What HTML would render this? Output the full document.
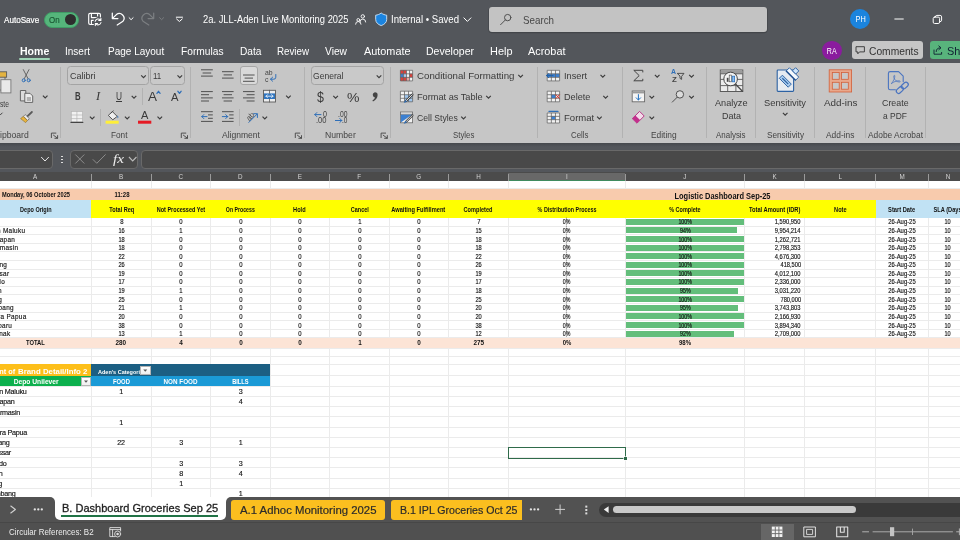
<!DOCTYPE html>
<html><head><meta charset="utf-8"><title>Excel</title>
<style>
html,body{margin:0;padding:0;}
body{width:960px;height:540px;overflow:hidden;position:relative;background:#53565b;font-family:'Liberation Sans', sans-serif;}
.t{position:absolute;white-space:pre;display:block;}
.c{-webkit-text-stroke:0.14px #111;}
svg{position:absolute;overflow:visible;}
#w{position:absolute;left:0;top:0;width:960px;height:540px;overflow:hidden;will-change:transform;}
</style></head><body><div id="w">
<div style="position:absolute;left:0px;top:0px;width:960px;height:62.5px;background:#53565b;"></div>
<div style="position:absolute;left:0px;top:62.5px;width:960px;height:80px;background:#c6c6c6;"></div>
<div style="position:absolute;left:0px;top:142.5px;width:960px;height:4px;background:linear-gradient(#46494d,#53565b);"></div>
<div style="position:absolute;left:43.6px;top:11.5px;width:35.4px;height:16px;background:#55b57b;border-radius:8px;border:1px solid #409c66;box-sizing:border-box;"></div>
<div style="position:absolute;left:64.9px;top:14px;width:11px;height:11px;background:#2e2e2e;border-radius:50%;"></div>
<div style="position:absolute;left:489px;top:6.9px;width:277.5px;height:25px;background:#c3c3c3;border-radius:3px;box-shadow:0 0.6px 0 0.7px #43464a;"></div>
<div style="position:absolute;left:850.4px;top:9.4px;width:20px;height:20px;background:#1b84de;border-radius:50%;"></div>
<div style="position:absolute;left:19.2px;top:58.2px;width:30.6px;height:1.8px;background:#9fd4b6;border-radius:1px;"></div>
<div style="position:absolute;left:822.2px;top:40.9px;width:19.4px;height:19.4px;background:#8a1c9e;border-radius:50%;"></div>
<div style="position:absolute;left:852.2px;top:41px;width:70.8px;height:18.4px;background:#c6c6c6;border-radius:3px;"></div>
<div style="position:absolute;left:930px;top:41px;width:40px;height:18.4px;background:#58b47c;border-radius:3px;"></div>
<div style="position:absolute;left:60.25px;top:67px;width:1px;height:71px;background:#b2b2b2;"></div>
<div style="position:absolute;left:190.1px;top:67px;width:1px;height:71px;background:#b2b2b2;"></div>
<div style="position:absolute;left:303.8px;top:67px;width:1px;height:71px;background:#b2b2b2;"></div>
<div style="position:absolute;left:389.8px;top:67px;width:1px;height:71px;background:#b2b2b2;"></div>
<div style="position:absolute;left:537.0px;top:67px;width:1px;height:71px;background:#b2b2b2;"></div>
<div style="position:absolute;left:621.5px;top:67px;width:1px;height:71px;background:#b2b2b2;"></div>
<div style="position:absolute;left:705.7px;top:67px;width:1px;height:71px;background:#b2b2b2;"></div>
<div style="position:absolute;left:755.0px;top:67px;width:1px;height:71px;background:#b2b2b2;"></div>
<div style="position:absolute;left:814.0px;top:67px;width:1px;height:71px;background:#b2b2b2;"></div>
<div style="position:absolute;left:864.8px;top:67px;width:1px;height:71px;background:#b2b2b2;"></div>
<div style="position:absolute;left:924.5px;top:67px;width:1px;height:71px;background:#b2b2b2;"></div>
<div style="position:absolute;left:142.0px;top:87.5px;width:1px;height:17.5px;background:#b2b2b2;"></div>
<div style="position:absolute;left:100.25px;top:109px;width:1px;height:17px;background:#b2b2b2;"></div>
<div style="position:absolute;left:239.0px;top:108.8px;width:1px;height:17.200000000000003px;background:#b2b2b2;"></div>
<div style="position:absolute;left:67.1px;top:66.2px;width:81.6px;height:19.099999999999994px;background:#c9c9c9;border:0.8px solid #a4a4a4;border-radius:3.5px;box-sizing:border-box;"></div>
<div style="position:absolute;left:150.1px;top:66.2px;width:34.9px;height:19.099999999999994px;background:#c9c9c9;border:0.8px solid #a4a4a4;border-radius:3.5px;box-sizing:border-box;"></div>
<div style="position:absolute;left:310.8px;top:66.2px;width:72.9px;height:19.099999999999994px;background:#c9c9c9;border:0.8px solid #a4a4a4;border-radius:3.5px;box-sizing:border-box;"></div>
<div style="position:absolute;left:115.5px;top:101px;width:6.5px;height:0.8px;background:#3a3a3a;"></div>
<div style="position:absolute;left:0px;top:146.5px;width:960px;height:25.5px;background:#53565b;"></div>
<div style="position:absolute;left:-5px;top:149.5px;width:58.4px;height:19.3px;background:#494949;border:0.9px solid #696969;border-radius:4px;box-sizing:border-box;"></div>
<div style="position:absolute;left:69.7px;top:149.5px;width:68.6px;height:19.3px;background:#494949;border:0.9px solid #696969;border-radius:4px;box-sizing:border-box;"></div>
<div style="position:absolute;left:141.3px;top:149.5px;width:830px;height:19.3px;background:#494949;border:0.9px solid #696969;border-radius:4px;box-sizing:border-box;"></div>
<div style="position:absolute;left:61px;top:155.60000000000002px;width:1.5px;height:1.5px;background:#ddd;"></div>
<div style="position:absolute;left:61px;top:158.60000000000002px;width:1.5px;height:1.5px;background:#ddd;"></div>
<div style="position:absolute;left:61px;top:161.60000000000002px;width:1.5px;height:1.5px;background:#ddd;"></div>
<div style="position:absolute;left:0px;top:172px;width:960px;height:9px;background:#4b4b4b;"></div>
<div style="position:absolute;left:508.3px;top:172.8px;width:117px;height:8.2px;background:#686868;"></div>
<div style="position:absolute;left:508.3px;top:180.3px;width:117px;height:0.8px;background:#3f8a5e;"></div>
<div style="position:absolute;left:90.5px;top:173.8px;width:1px;height:7.2px;background:#9a9a9a;"></div>
<div style="position:absolute;left:150.5px;top:173.8px;width:1px;height:7.2px;background:#9a9a9a;"></div>
<div style="position:absolute;left:210.2px;top:173.8px;width:1px;height:7.2px;background:#9a9a9a;"></div>
<div style="position:absolute;left:269.5px;top:173.8px;width:1px;height:7.2px;background:#9a9a9a;"></div>
<div style="position:absolute;left:329.1px;top:173.8px;width:1px;height:7.2px;background:#9a9a9a;"></div>
<div style="position:absolute;left:388.5px;top:173.8px;width:1px;height:7.2px;background:#9a9a9a;"></div>
<div style="position:absolute;left:448.1px;top:173.8px;width:1px;height:7.2px;background:#9a9a9a;"></div>
<div style="position:absolute;left:507.8px;top:173.8px;width:1px;height:7.2px;background:#9a9a9a;"></div>
<div style="position:absolute;left:624.9px;top:173.8px;width:1px;height:7.2px;background:#9a9a9a;"></div>
<div style="position:absolute;left:744.0px;top:173.8px;width:1px;height:7.2px;background:#9a9a9a;"></div>
<div style="position:absolute;left:804.0px;top:173.8px;width:1px;height:7.2px;background:#9a9a9a;"></div>
<div style="position:absolute;left:875.3px;top:173.8px;width:1px;height:7.2px;background:#9a9a9a;"></div>
<div style="position:absolute;left:928.1px;top:173.8px;width:1px;height:7.2px;background:#9a9a9a;"></div>
<div style="position:absolute;left:967.0px;top:173.8px;width:1px;height:7.2px;background:#9a9a9a;"></div>
<div style="position:absolute;left:0px;top:181px;width:960px;height:316px;background:#fff;"></div>
<div style="position:absolute;left:0px;top:187.8px;width:960px;height:1px;background:#ebebeb;"></div>
<div style="position:absolute;left:0px;top:199.5px;width:960px;height:1px;background:#ebebeb;"></div>
<div style="position:absolute;left:0px;top:216.9px;width:960px;height:1px;background:#ebebeb;"></div>
<div style="position:absolute;left:0px;top:225.5px;width:960px;height:1px;background:#ebebeb;"></div>
<div style="position:absolute;left:0px;top:234.1px;width:960px;height:1px;background:#ebebeb;"></div>
<div style="position:absolute;left:0px;top:242.7px;width:960px;height:1px;background:#ebebeb;"></div>
<div style="position:absolute;left:0px;top:251.3px;width:960px;height:1px;background:#ebebeb;"></div>
<div style="position:absolute;left:0px;top:259.9px;width:960px;height:1px;background:#ebebeb;"></div>
<div style="position:absolute;left:0px;top:268.5px;width:960px;height:1px;background:#ebebeb;"></div>
<div style="position:absolute;left:0px;top:277.1px;width:960px;height:1px;background:#ebebeb;"></div>
<div style="position:absolute;left:0px;top:285.7px;width:960px;height:1px;background:#ebebeb;"></div>
<div style="position:absolute;left:0px;top:294.3px;width:960px;height:1px;background:#ebebeb;"></div>
<div style="position:absolute;left:0px;top:302.9px;width:960px;height:1px;background:#ebebeb;"></div>
<div style="position:absolute;left:0px;top:311.5px;width:960px;height:1px;background:#ebebeb;"></div>
<div style="position:absolute;left:0px;top:320.1px;width:960px;height:1px;background:#ebebeb;"></div>
<div style="position:absolute;left:0px;top:328.7px;width:960px;height:1px;background:#ebebeb;"></div>
<div style="position:absolute;left:0px;top:337.3px;width:960px;height:1px;background:#ebebeb;"></div>
<div style="position:absolute;left:0px;top:347.5px;width:960px;height:1px;background:#ebebeb;"></div>
<div style="position:absolute;left:0px;top:356.1px;width:960px;height:1px;background:#ebebeb;"></div>
<div style="position:absolute;left:0px;top:364.0px;width:960px;height:1px;background:#ebebeb;"></div>
<div style="position:absolute;left:0px;top:375.3px;width:960px;height:1px;background:#ebebeb;"></div>
<div style="position:absolute;left:0px;top:385.8px;width:960px;height:1px;background:#ebebeb;"></div>
<div style="position:absolute;left:0px;top:396.0px;width:960px;height:1px;background:#ebebeb;"></div>
<div style="position:absolute;left:0px;top:406.2px;width:960px;height:1px;background:#ebebeb;"></div>
<div style="position:absolute;left:0px;top:416.40000000000003px;width:960px;height:1px;background:#ebebeb;"></div>
<div style="position:absolute;left:0px;top:426.6px;width:960px;height:1px;background:#ebebeb;"></div>
<div style="position:absolute;left:0px;top:436.8px;width:960px;height:1px;background:#ebebeb;"></div>
<div style="position:absolute;left:0px;top:447.0px;width:960px;height:1px;background:#ebebeb;"></div>
<div style="position:absolute;left:0px;top:457.2px;width:960px;height:1px;background:#ebebeb;"></div>
<div style="position:absolute;left:0px;top:467.4px;width:960px;height:1px;background:#ebebeb;"></div>
<div style="position:absolute;left:0px;top:477.6px;width:960px;height:1px;background:#ebebeb;"></div>
<div style="position:absolute;left:0px;top:487.8px;width:960px;height:1px;background:#ebebeb;"></div>
<div style="position:absolute;left:0px;top:498.0px;width:960px;height:1px;background:#ebebeb;"></div>
<div style="position:absolute;left:90.5px;top:181px;width:1px;height:316px;background:#ebebeb;"></div>
<div style="position:absolute;left:150.5px;top:181px;width:1px;height:316px;background:#ebebeb;"></div>
<div style="position:absolute;left:210.2px;top:181px;width:1px;height:316px;background:#ebebeb;"></div>
<div style="position:absolute;left:269.5px;top:181px;width:1px;height:316px;background:#ebebeb;"></div>
<div style="position:absolute;left:329.1px;top:181px;width:1px;height:316px;background:#ebebeb;"></div>
<div style="position:absolute;left:388.5px;top:181px;width:1px;height:316px;background:#ebebeb;"></div>
<div style="position:absolute;left:448.1px;top:181px;width:1px;height:316px;background:#ebebeb;"></div>
<div style="position:absolute;left:507.8px;top:181px;width:1px;height:316px;background:#ebebeb;"></div>
<div style="position:absolute;left:624.9px;top:181px;width:1px;height:316px;background:#ebebeb;"></div>
<div style="position:absolute;left:744.0px;top:181px;width:1px;height:316px;background:#ebebeb;"></div>
<div style="position:absolute;left:804.0px;top:181px;width:1px;height:316px;background:#ebebeb;"></div>
<div style="position:absolute;left:875.3px;top:181px;width:1px;height:316px;background:#ebebeb;"></div>
<div style="position:absolute;left:928.1px;top:181px;width:1px;height:316px;background:#ebebeb;"></div>
<div style="position:absolute;left:967.0px;top:181px;width:1px;height:316px;background:#ebebeb;"></div>
<div style="position:absolute;left:0px;top:189.3px;width:960px;height:11px;background:#f8cbad;"></div>
<div style="position:absolute;left:0px;top:200.3px;width:91px;height:17.5px;background:#c1e2f4;"></div>
<div style="position:absolute;left:91px;top:200.3px;width:784.8px;height:17.5px;background:#ffff00;"></div>
<div style="position:absolute;left:875.8px;top:200.3px;width:90px;height:17.5px;background:#c1e2f4;"></div>
<div style="position:absolute;left:0px;top:337.8px;width:960px;height:10.2px;background:#fce4d6;"></div>
<div style="position:absolute;left:626px;top:218.70000000000002px;width:117.9px;height:6px;background:#63be7b;"></div>
<div style="position:absolute;left:626px;top:227.3px;width:110.82600000000001px;height:6px;background:#63be7b;"></div>
<div style="position:absolute;left:626px;top:235.9px;width:117.9px;height:6px;background:#63be7b;"></div>
<div style="position:absolute;left:626px;top:244.5px;width:117.9px;height:6px;background:#63be7b;"></div>
<div style="position:absolute;left:626px;top:253.10000000000002px;width:117.9px;height:6px;background:#63be7b;"></div>
<div style="position:absolute;left:626px;top:261.7px;width:117.9px;height:6px;background:#63be7b;"></div>
<div style="position:absolute;left:626px;top:270.3px;width:117.9px;height:6px;background:#63be7b;"></div>
<div style="position:absolute;left:626px;top:278.90000000000003px;width:117.9px;height:6px;background:#63be7b;"></div>
<div style="position:absolute;left:626px;top:287.5px;width:112.005px;height:6px;background:#63be7b;"></div>
<div style="position:absolute;left:626px;top:296.1px;width:117.9px;height:6px;background:#63be7b;"></div>
<div style="position:absolute;left:626px;top:304.7px;width:112.005px;height:6px;background:#63be7b;"></div>
<div style="position:absolute;left:626px;top:313.3px;width:117.9px;height:6px;background:#63be7b;"></div>
<div style="position:absolute;left:626px;top:321.90000000000003px;width:117.9px;height:6px;background:#63be7b;"></div>
<div style="position:absolute;left:626px;top:330.5px;width:108.46800000000002px;height:6px;background:#63be7b;"></div>
<div style="position:absolute;left:0px;top:364.2px;width:91px;height:11.6px;background:#fdbf1a;"></div>
<div style="position:absolute;left:91px;top:364.2px;width:179px;height:11.8px;background:#1c5f83;"></div>
<div style="position:absolute;left:0px;top:375.8px;width:91px;height:10.5px;background:#0cb04d;"></div>
<div style="position:absolute;left:91px;top:375.8px;width:179px;height:10.5px;background:#1b9ad6;"></div>
<div style="position:absolute;left:140px;top:365.5px;width:10.5px;height:9.6px;background:linear-gradient(#fff,#efefef);border:0.5px solid #b4b4b4;box-sizing:border-box;"></div>
<div style="position:absolute;left:81.2px;top:376.7px;width:9.6px;height:9.4px;background:linear-gradient(#fff,#efefef);border:0.5px solid #b4b4b4;box-sizing:border-box;"></div>
<div style="position:absolute;left:239.6px;top:66.4px;width:18.4px;height:18.6px;background:#d9d9d9;border:0.6px solid #a6a6a6;border-radius:3px;box-sizing:border-box;"></div>
<span class="t" style="left:3.80px;font-size:9.3px;line-height:9.3px;color:#fff;font-weight:400;top:15.65px;-webkit-text-stroke:0.2px #fff;transform:scaleX(0.8728);transform-origin:left center;">AutoSave</span>
<span class="t" style="left:49.40px;font-size:9.3px;line-height:9.3px;color:#1c5a35;font-weight:400;top:15.65px;-webkit-text-stroke:0.2px #1c5a35;transform:scaleX(0.8544);transform-origin:left center;">On</span>
<span class="t" style="left:203.00px;font-size:10.2px;line-height:10.2px;color:#fff;font-weight:400;top:14.70px;transform:scaleX(0.9208);transform-origin:left center;">2a. JLL-Aden Live Monitoring 2025</span>
<span class="t" style="left:391.00px;font-size:10.2px;line-height:10.2px;color:#fff;font-weight:400;top:14.70px;transform:scaleX(0.9432);transform-origin:left center;">Internal • Saved</span>
<span class="t" style="left:522.50px;font-size:10.2px;line-height:10.2px;color:#484848;font-weight:400;top:15.70px;transform:scaleX(0.9603);transform-origin:left center;">Search</span>
<span class="t" style="left:854.71px;font-size:8.2px;line-height:8.2px;color:#fff;font-weight:400;top:15.70px;transform:scaleX(0.8967);transform-origin:center center;">PH</span>
<span class="t" style="left:19.50px;font-size:10.2px;line-height:10.2px;color:#fff;font-weight:700;top:46.70px;transform:scaleX(1.0349);transform-origin:left center;">Home</span>
<span class="t" style="left:65.00px;font-size:10.2px;line-height:10.2px;color:#fff;font-weight:400;top:46.70px;transform:scaleX(0.9810);transform-origin:left center;">Insert</span>
<span class="t" style="left:108.00px;font-size:10.2px;line-height:10.2px;color:#fff;font-weight:400;top:46.70px;transform:scaleX(0.9822);transform-origin:left center;">Page Layout</span>
<span class="t" style="left:181.20px;font-size:10.2px;line-height:10.2px;color:#fff;font-weight:400;top:46.70px;transform:scaleX(1.0031);transform-origin:left center;">Formulas</span>
<span class="t" style="left:240.00px;font-size:10.2px;line-height:10.2px;color:#fff;font-weight:400;top:46.70px;transform:scaleX(0.9985);transform-origin:left center;">Data</span>
<span class="t" style="left:277.00px;font-size:10.2px;line-height:10.2px;color:#fff;font-weight:400;top:46.70px;transform:scaleX(0.9579);transform-origin:left center;">Review</span>
<span class="t" style="left:325.00px;font-size:10.2px;line-height:10.2px;color:#fff;font-weight:400;top:46.70px;transform:scaleX(1.0043);transform-origin:left center;">View</span>
<span class="t" style="left:363.50px;font-size:10.2px;line-height:10.2px;color:#fff;font-weight:400;top:46.70px;transform:scaleX(1.0663);transform-origin:left center;">Automate</span>
<span class="t" style="left:425.50px;font-size:10.2px;line-height:10.2px;color:#fff;font-weight:400;top:46.70px;transform:scaleX(1.0336);transform-origin:left center;">Developer</span>
<span class="t" style="left:490.00px;font-size:10.2px;line-height:10.2px;color:#fff;font-weight:400;top:46.70px;transform:scaleX(1.0738);transform-origin:left center;">Help</span>
<span class="t" style="left:527.50px;font-size:10.2px;line-height:10.2px;color:#fff;font-weight:400;top:46.70px;transform:scaleX(1.0681);transform-origin:left center;">Acrobat</span>
<span class="t" style="left:826.11px;font-size:8.2px;line-height:8.2px;color:#fff;font-weight:400;top:47.70px;transform:scaleX(0.8615);transform-origin:center center;">RA</span>
<span class="t" style="left:869.00px;font-size:10.4px;line-height:10.4px;color:#333;font-weight:400;top:46.60px;transform:scaleX(0.9874);transform-origin:left center;">Comments</span>
<span class="t" style="left:947.20px;font-size:10.4px;line-height:10.4px;color:#123;font-weight:400;top:46.60px;transform:scaleX(1.0486);transform-origin:left center;">Sha</span>
<span class="t" style="left:0.20px;font-size:9.3px;line-height:9.3px;color:#444;font-weight:400;top:130.65px;transform:scaleX(0.9286);transform-origin:left center;">ipboard</span>
<span class="t" style="left:111.00px;font-size:9.3px;line-height:9.3px;color:#444;font-weight:400;top:130.65px;transform:scaleX(0.8866);transform-origin:left center;">Font</span>
<span class="t" style="left:222.00px;font-size:9.3px;line-height:9.3px;color:#444;font-weight:400;top:130.65px;transform:scaleX(0.9191);transform-origin:left center;">Alignment</span>
<span class="t" style="left:325.00px;font-size:9.3px;line-height:9.3px;color:#444;font-weight:400;top:130.65px;transform:scaleX(0.9311);transform-origin:left center;">Number</span>
<span class="t" style="left:452.50px;font-size:9.3px;line-height:9.3px;color:#444;font-weight:400;top:130.65px;transform:scaleX(0.8410);transform-origin:left center;">Styles</span>
<span class="t" style="left:570.80px;font-size:9.3px;line-height:9.3px;color:#444;font-weight:400;top:130.65px;transform:scaleX(0.8417);transform-origin:left center;">Cells</span>
<span class="t" style="left:651.20px;font-size:9.3px;line-height:9.3px;color:#444;font-weight:400;top:130.65px;transform:scaleX(0.9002);transform-origin:left center;">Editing</span>
<span class="t" style="left:716.20px;font-size:9.3px;line-height:9.3px;color:#444;font-weight:400;top:130.65px;transform:scaleX(0.8549);transform-origin:left center;">Analysis</span>
<span class="t" style="left:766.80px;font-size:9.3px;line-height:9.3px;color:#444;font-weight:400;top:130.65px;transform:scaleX(0.8839);transform-origin:left center;">Sensitivity</span>
<span class="t" style="left:825.80px;font-size:9.3px;line-height:9.3px;color:#444;font-weight:400;top:130.65px;transform:scaleX(0.9007);transform-origin:left center;">Add-ins</span>
<span class="t" style="left:867.50px;font-size:9.3px;line-height:9.3px;color:#444;font-weight:400;top:130.65px;transform:scaleX(0.9016);transform-origin:left center;">Adobe Acrobat</span>
<span class="t" style="left:0.00px;font-size:9.8px;line-height:9.8px;color:#3a3a3a;font-weight:400;top:98.90px;transform:scaleX(0.6805);transform-origin:left center;">ste</span>
<span class="t" style="left:69.50px;font-size:9.8px;line-height:9.8px;color:#3a3a3a;font-weight:400;top:70.90px;transform:scaleX(0.9184);transform-origin:left center;">Calibri</span>
<span class="t" style="left:153.20px;font-size:9.8px;line-height:9.8px;color:#3a3a3a;font-weight:400;top:70.90px;transform:scaleX(0.8061);transform-origin:left center;">11</span>
<span class="t" style="left:313.20px;font-size:9.8px;line-height:9.8px;color:#3a3a3a;font-weight:400;top:70.90px;transform:scaleX(0.8749);transform-origin:left center;">General</span>
<span class="t" style="left:74.50px;font-size:10.7px;line-height:10.7px;color:#3a3a3a;font-weight:700;top:90.95px;transform:scaleX(0.7255);transform-origin:left center;">B</span>
<span class="t" style="left:95.90px;font-size:11.6px;line-height:11.6px;color:#3a3a3a;font-weight:400;top:90.50px;font-style:italic;font-family:'Liberation Serif',serif;transform:scaleX(1.0839);transform-origin:left center;">I</span>
<span class="t" style="left:115.70px;font-size:10.2px;line-height:10.2px;color:#3a3a3a;font-weight:400;top:91.70px;transform:scaleX(0.8153);transform-origin:left center;">U</span>
<span class="t" style="left:148.00px;font-size:13px;line-height:13px;color:#3a3a3a;font-weight:400;top:90.30px;transform:scaleX(1.0378);transform-origin:left center;">A</span>
<span class="t" style="left:170.50px;font-size:11px;line-height:11px;color:#3a3a3a;font-weight:400;top:91.80px;transform:scaleX(1.0213);transform-origin:left center;">A</span>
<span class="t" style="left:316.90px;font-size:15px;line-height:15px;color:#3a3a3a;font-weight:400;top:89.30px;transform:scaleX(0.8270);transform-origin:left center;">$</span>
<span class="t" style="left:347.00px;font-size:13.5px;line-height:13.5px;color:#3a3a3a;font-weight:400;top:91.05px;transform:scaleX(1.0403);transform-origin:left center;">%</span>
<span class="t" style="left:416.80px;font-size:9.8px;line-height:9.8px;color:#3a3a3a;font-weight:400;top:70.90px;transform:scaleX(0.9892);transform-origin:left center;">Conditional Formatting</span>
<span class="t" style="left:416.80px;font-size:9.8px;line-height:9.8px;color:#3a3a3a;font-weight:400;top:91.90px;transform:scaleX(0.9377);transform-origin:left center;">Format as Table</span>
<span class="t" style="left:416.80px;font-size:9.8px;line-height:9.8px;color:#3a3a3a;font-weight:400;top:112.90px;transform:scaleX(0.8794);transform-origin:left center;">Cell Styles</span>
<span class="t" style="left:563.60px;font-size:9.8px;line-height:9.8px;color:#3a3a3a;font-weight:400;top:70.90px;transform:scaleX(0.9423);transform-origin:left center;">Insert</span>
<span class="t" style="left:563.70px;font-size:9.8px;line-height:9.8px;color:#3a3a3a;font-weight:400;top:91.90px;transform:scaleX(0.9284);transform-origin:left center;">Delete</span>
<span class="t" style="left:563.70px;font-size:9.8px;line-height:9.8px;color:#3a3a3a;font-weight:400;top:112.90px;transform:scaleX(0.9732);transform-origin:left center;">Format</span>
<span class="t" style="left:715.00px;font-size:9.8px;line-height:9.8px;color:#3a3a3a;font-weight:400;top:97.90px;transform:scaleX(0.9323);transform-origin:left center;">Analyze</span>
<span class="t" style="left:721.80px;font-size:9.8px;line-height:9.8px;color:#3a3a3a;font-weight:400;top:110.90px;transform:scaleX(0.9177);transform-origin:left center;">Data</span>
<span class="t" style="left:764.20px;font-size:9.8px;line-height:9.8px;color:#3a3a3a;font-weight:400;top:97.90px;transform:scaleX(0.9522);transform-origin:left center;">Sensitivity</span>
<span class="t" style="left:823.60px;font-size:9.8px;line-height:9.8px;color:#3a3a3a;font-weight:400;top:97.90px;transform:scaleX(1.0055);transform-origin:left center;">Add-ins</span>
<span class="t" style="left:882.00px;font-size:9.8px;line-height:9.8px;color:#3a3a3a;font-weight:400;top:97.90px;transform:scaleX(0.9046);transform-origin:left center;">Create</span>
<span class="t" style="left:883.30px;font-size:9.8px;line-height:9.8px;color:#3a3a3a;font-weight:400;top:110.90px;transform:scaleX(0.8608);transform-origin:left center;">a PDF</span>
<span class="t" style="left:113.00px;font-size:12px;line-height:12px;color:#eee;font-weight:400;top:153.30px;font-style:italic;font-family:'Liberation Serif',serif;transform:scaleX(1.2685);transform-origin:left center;">fx</span>
<span class="t" style="left:32.90px;font-size:6.3px;line-height:6.3px;color:#d4d4d4;font-weight:400;top:173.65px;">A</span>
<span class="t" style="left:118.90px;font-size:6.3px;line-height:6.3px;color:#d4d4d4;font-weight:400;top:173.65px;">B</span>
<span class="t" style="left:178.57px;font-size:6.3px;line-height:6.3px;color:#d4d4d4;font-weight:400;top:173.65px;">C</span>
<span class="t" style="left:238.07px;font-size:6.3px;line-height:6.3px;color:#d4d4d4;font-weight:400;top:173.65px;">D</span>
<span class="t" style="left:297.70px;font-size:6.3px;line-height:6.3px;color:#d4d4d4;font-weight:400;top:173.65px;">E</span>
<span class="t" style="left:357.37px;font-size:6.3px;line-height:6.3px;color:#d4d4d4;font-weight:400;top:173.65px;">F</span>
<span class="t" style="left:416.35px;font-size:6.3px;line-height:6.3px;color:#d4d4d4;font-weight:400;top:173.65px;">G</span>
<span class="t" style="left:476.17px;font-size:6.3px;line-height:6.3px;color:#d4d4d4;font-weight:400;top:173.65px;">H</span>
<span class="t" style="left:565.98px;font-size:6.3px;line-height:6.3px;color:#d4d4d4;font-weight:400;top:173.65px;">I</span>
<span class="t" style="left:683.37px;font-size:6.3px;line-height:6.3px;color:#d4d4d4;font-weight:400;top:173.65px;">J</span>
<span class="t" style="left:772.40px;font-size:6.3px;line-height:6.3px;color:#d4d4d4;font-weight:400;top:173.65px;">K</span>
<span class="t" style="left:838.39px;font-size:6.3px;line-height:6.3px;color:#d4d4d4;font-weight:400;top:173.65px;">L</span>
<span class="t" style="left:899.58px;font-size:6.3px;line-height:6.3px;color:#d4d4d4;font-weight:400;top:173.65px;">M</span>
<span class="t" style="left:945.77px;font-size:6.3px;line-height:6.3px;color:#d4d4d4;font-weight:400;top:173.65px;">N</span>
<span class="t" style="left:1.50px;font-size:6.4px;line-height:6.4px;color:#111;font-weight:700;top:191.60px;transform:scaleX(0.8876);transform-origin:left center;">Monday, 06 October 2025</span>
<span class="t" style="left:114.00px;font-size:6.4px;line-height:6.4px;color:#111;font-weight:700;top:191.60px;transform:scaleX(0.9375);transform-origin:center center;">11:28</span>
<span class="t" style="left:669.02px;font-size:8.3px;line-height:8.3px;color:#111;font-weight:700;top:192.15px;transform:scaleX(0.8975);transform-origin:center center;">Logistic Dashboard Sep-25</span>
<span class="t" style="left:16.83px;font-size:6.6px;line-height:6.6px;color:#111;font-weight:700;top:206.50px;transform:scaleX(0.8348);transform-origin:center center;">Depo Origin</span>
<span class="t" style="left:106.72px;font-size:6.6px;line-height:6.6px;color:#111;font-weight:700;top:206.50px;transform:scaleX(0.8457);transform-origin:center center;">Total Req</span>
<span class="t" style="left:151.90px;font-size:6.6px;line-height:6.6px;color:#111;font-weight:700;top:206.50px;transform:scaleX(0.8391);transform-origin:center center;">Not Processed Yet</span>
<span class="t" style="left:222.17px;font-size:6.6px;line-height:6.6px;color:#111;font-weight:700;top:206.50px;transform:scaleX(0.7911);transform-origin:center center;">On Process</span>
<span class="t" style="left:292.47px;font-size:6.6px;line-height:6.6px;color:#111;font-weight:700;top:206.50px;transform:scaleX(0.8529);transform-origin:center center;">Hold</span>
<span class="t" style="left:348.69px;font-size:6.6px;line-height:6.6px;color:#111;font-weight:700;top:206.50px;transform:scaleX(0.8324);transform-origin:center center;">Cancel</span>
<span class="t" style="left:387.23px;font-size:6.6px;line-height:6.6px;color:#111;font-weight:700;top:206.50px;transform:scaleX(0.8636);transform-origin:center center;">Awaiting Fulfillment</span>
<span class="t" style="left:461.46px;font-size:6.6px;line-height:6.6px;color:#111;font-weight:700;top:206.50px;transform:scaleX(0.8510);transform-origin:center center;">Completed</span>
<span class="t" style="left:530.91px;font-size:6.6px;line-height:6.6px;color:#111;font-weight:700;top:206.50px;transform:scaleX(0.8173);transform-origin:center center;">% Distribution Process</span>
<span class="t" style="left:665.92px;font-size:6.6px;line-height:6.6px;color:#111;font-weight:700;top:206.50px;transform:scaleX(0.8344);transform-origin:center center;">% Complete</span>
<span class="t" style="left:744.53px;font-size:6.6px;line-height:6.6px;color:#111;font-weight:700;top:206.50px;transform:scaleX(0.8678);transform-origin:center center;">Total Amount (IDR)</span>
<span class="t" style="left:832.87px;font-size:6.6px;line-height:6.6px;color:#111;font-weight:700;top:206.50px;transform:scaleX(0.8529);transform-origin:center center;">Note</span>
<span class="t" style="left:886.42px;font-size:6.6px;line-height:6.6px;color:#111;font-weight:700;top:206.50px;transform:scaleX(0.8666);transform-origin:center center;">Start Date</span>
<span class="t" style="left:931.03px;font-size:6.6px;line-height:6.6px;color:#111;font-weight:700;top:206.50px;transform:scaleX(0.8587);transform-origin:center center;">SLA (Days)</span>
<span class="t c" style="left:119.52px;font-size:6.4px;line-height:6.4px;color:#111;font-weight:400;top:218.60px;transform:scaleX(0.9263);transform-origin:center center;">8</span>
<span class="t c" style="left:179.22px;font-size:6.4px;line-height:6.4px;color:#111;font-weight:400;top:218.60px;transform:scaleX(0.9263);transform-origin:center center;">0</span>
<span class="t c" style="left:238.72px;font-size:6.4px;line-height:6.4px;color:#111;font-weight:400;top:218.60px;transform:scaleX(0.9263);transform-origin:center center;">0</span>
<span class="t c" style="left:298.22px;font-size:6.4px;line-height:6.4px;color:#111;font-weight:400;top:218.60px;transform:scaleX(0.9263);transform-origin:center center;">0</span>
<span class="t c" style="left:357.72px;font-size:6.4px;line-height:6.4px;color:#111;font-weight:400;top:218.60px;transform:scaleX(0.9263);transform-origin:center center;">1</span>
<span class="t c" style="left:416.72px;font-size:6.4px;line-height:6.4px;color:#111;font-weight:400;top:218.60px;transform:scaleX(0.9263);transform-origin:center center;">0</span>
<span class="t c" style="left:476.72px;font-size:6.4px;line-height:6.4px;color:#111;font-weight:400;top:218.60px;transform:scaleX(0.9263);transform-origin:center center;">7</span>
<span class="t c" style="left:562.38px;font-size:6.4px;line-height:6.4px;color:#111;font-weight:400;top:218.60px;transform:scaleX(0.8216);transform-origin:center center;">0%</span>
<span class="t c" style="left:676.82px;font-size:6.4px;line-height:6.4px;color:#111;font-weight:400;top:218.60px;transform:scaleX(0.8252);transform-origin:center center;">100%</span>
<span class="t c" style="left:772.26px;font-size:6.4px;line-height:6.4px;color:#111;font-weight:400;top:218.60px;transform:scaleX(0.9037);transform-origin:right center;">1,590,950</span>
<span class="t c" style="left:887.27px;font-size:6.4px;line-height:6.4px;color:#111;font-weight:400;top:218.60px;transform:scaleX(0.9210);transform-origin:center center;">26-Aug-25</span>
<span class="t c" style="left:944.15px;font-size:6.4px;line-height:6.4px;color:#111;font-weight:400;top:218.60px;transform:scaleX(0.8721);transform-origin:center center;">10</span>
<span class="t c" style="left:-20.93px;font-size:6.4px;line-height:6.4px;color:#111;font-weight:400;top:227.60px;letter-spacing:0.3px;">Ambon Maluku</span>
<span class="t c" style="left:117.75px;font-size:6.4px;line-height:6.4px;color:#111;font-weight:400;top:227.60px;transform:scaleX(0.8862);transform-origin:center center;">16</span>
<span class="t c" style="left:179.22px;font-size:6.4px;line-height:6.4px;color:#111;font-weight:400;top:227.60px;transform:scaleX(0.9263);transform-origin:center center;">1</span>
<span class="t c" style="left:238.72px;font-size:6.4px;line-height:6.4px;color:#111;font-weight:400;top:227.60px;transform:scaleX(0.9263);transform-origin:center center;">0</span>
<span class="t c" style="left:298.22px;font-size:6.4px;line-height:6.4px;color:#111;font-weight:400;top:227.60px;transform:scaleX(0.9263);transform-origin:center center;">0</span>
<span class="t c" style="left:357.72px;font-size:6.4px;line-height:6.4px;color:#111;font-weight:400;top:227.60px;transform:scaleX(0.9263);transform-origin:center center;">0</span>
<span class="t c" style="left:416.72px;font-size:6.4px;line-height:6.4px;color:#111;font-weight:400;top:227.60px;transform:scaleX(0.9263);transform-origin:center center;">0</span>
<span class="t c" style="left:474.95px;font-size:6.4px;line-height:6.4px;color:#111;font-weight:400;top:227.60px;transform:scaleX(0.8862);transform-origin:center center;">15</span>
<span class="t c" style="left:562.38px;font-size:6.4px;line-height:6.4px;color:#111;font-weight:400;top:227.60px;transform:scaleX(0.8216);transform-origin:center center;">0%</span>
<span class="t c" style="left:678.60px;font-size:6.4px;line-height:6.4px;color:#111;font-weight:400;top:227.60px;transform:scaleX(0.8283);transform-origin:center center;">94%</span>
<span class="t c" style="left:772.26px;font-size:6.4px;line-height:6.4px;color:#111;font-weight:400;top:227.60px;transform:scaleX(0.9037);transform-origin:right center;">9,954,214</span>
<span class="t c" style="left:887.27px;font-size:6.4px;line-height:6.4px;color:#111;font-weight:400;top:227.60px;transform:scaleX(0.9210);transform-origin:center center;">26-Aug-25</span>
<span class="t c" style="left:944.15px;font-size:6.4px;line-height:6.4px;color:#111;font-weight:400;top:227.60px;transform:scaleX(0.8721);transform-origin:center center;">10</span>
<span class="t c" style="left:-19.52px;font-size:6.4px;line-height:6.4px;color:#111;font-weight:400;top:236.60px;letter-spacing:0.3px;">Balikpapan</span>
<span class="t c" style="left:117.75px;font-size:6.4px;line-height:6.4px;color:#111;font-weight:400;top:236.60px;transform:scaleX(0.8862);transform-origin:center center;">18</span>
<span class="t c" style="left:179.22px;font-size:6.4px;line-height:6.4px;color:#111;font-weight:400;top:236.60px;transform:scaleX(0.9263);transform-origin:center center;">0</span>
<span class="t c" style="left:238.72px;font-size:6.4px;line-height:6.4px;color:#111;font-weight:400;top:236.60px;transform:scaleX(0.9263);transform-origin:center center;">0</span>
<span class="t c" style="left:298.22px;font-size:6.4px;line-height:6.4px;color:#111;font-weight:400;top:236.60px;transform:scaleX(0.9263);transform-origin:center center;">0</span>
<span class="t c" style="left:357.72px;font-size:6.4px;line-height:6.4px;color:#111;font-weight:400;top:236.60px;transform:scaleX(0.9263);transform-origin:center center;">0</span>
<span class="t c" style="left:416.72px;font-size:6.4px;line-height:6.4px;color:#111;font-weight:400;top:236.60px;transform:scaleX(0.9263);transform-origin:center center;">0</span>
<span class="t c" style="left:474.95px;font-size:6.4px;line-height:6.4px;color:#111;font-weight:400;top:236.60px;transform:scaleX(0.8862);transform-origin:center center;">18</span>
<span class="t c" style="left:562.38px;font-size:6.4px;line-height:6.4px;color:#111;font-weight:400;top:236.60px;transform:scaleX(0.8216);transform-origin:center center;">0%</span>
<span class="t c" style="left:676.82px;font-size:6.4px;line-height:6.4px;color:#111;font-weight:400;top:236.60px;transform:scaleX(0.8252);transform-origin:center center;">100%</span>
<span class="t c" style="left:772.26px;font-size:6.4px;line-height:6.4px;color:#111;font-weight:400;top:236.60px;transform:scaleX(0.9037);transform-origin:right center;">1,262,721</span>
<span class="t c" style="left:887.27px;font-size:6.4px;line-height:6.4px;color:#111;font-weight:400;top:236.60px;transform:scaleX(0.9210);transform-origin:center center;">26-Aug-25</span>
<span class="t c" style="left:944.15px;font-size:6.4px;line-height:6.4px;color:#111;font-weight:400;top:236.60px;transform:scaleX(0.8721);transform-origin:center center;">10</span>
<span class="t c" style="left:-20.43px;font-size:6.4px;line-height:6.4px;color:#111;font-weight:400;top:244.60px;letter-spacing:0.3px;">Banjarmasin</span>
<span class="t c" style="left:117.75px;font-size:6.4px;line-height:6.4px;color:#111;font-weight:400;top:244.60px;transform:scaleX(0.8862);transform-origin:center center;">18</span>
<span class="t c" style="left:179.22px;font-size:6.4px;line-height:6.4px;color:#111;font-weight:400;top:244.60px;transform:scaleX(0.9263);transform-origin:center center;">0</span>
<span class="t c" style="left:238.72px;font-size:6.4px;line-height:6.4px;color:#111;font-weight:400;top:244.60px;transform:scaleX(0.9263);transform-origin:center center;">0</span>
<span class="t c" style="left:298.22px;font-size:6.4px;line-height:6.4px;color:#111;font-weight:400;top:244.60px;transform:scaleX(0.9263);transform-origin:center center;">0</span>
<span class="t c" style="left:357.72px;font-size:6.4px;line-height:6.4px;color:#111;font-weight:400;top:244.60px;transform:scaleX(0.9263);transform-origin:center center;">0</span>
<span class="t c" style="left:416.72px;font-size:6.4px;line-height:6.4px;color:#111;font-weight:400;top:244.60px;transform:scaleX(0.9263);transform-origin:center center;">0</span>
<span class="t c" style="left:474.95px;font-size:6.4px;line-height:6.4px;color:#111;font-weight:400;top:244.60px;transform:scaleX(0.8862);transform-origin:center center;">18</span>
<span class="t c" style="left:562.38px;font-size:6.4px;line-height:6.4px;color:#111;font-weight:400;top:244.60px;transform:scaleX(0.8216);transform-origin:center center;">0%</span>
<span class="t c" style="left:676.82px;font-size:6.4px;line-height:6.4px;color:#111;font-weight:400;top:244.60px;transform:scaleX(0.8252);transform-origin:center center;">100%</span>
<span class="t c" style="left:772.26px;font-size:6.4px;line-height:6.4px;color:#111;font-weight:400;top:244.60px;transform:scaleX(0.9037);transform-origin:right center;">2,798,353</span>
<span class="t c" style="left:887.27px;font-size:6.4px;line-height:6.4px;color:#111;font-weight:400;top:244.60px;transform:scaleX(0.9210);transform-origin:center center;">26-Aug-25</span>
<span class="t c" style="left:944.15px;font-size:6.4px;line-height:6.4px;color:#111;font-weight:400;top:244.60px;transform:scaleX(0.8721);transform-origin:center center;">10</span>
<span class="t c" style="left:117.75px;font-size:6.4px;line-height:6.4px;color:#111;font-weight:400;top:253.60px;transform:scaleX(0.8862);transform-origin:center center;">22</span>
<span class="t c" style="left:179.22px;font-size:6.4px;line-height:6.4px;color:#111;font-weight:400;top:253.60px;transform:scaleX(0.9263);transform-origin:center center;">0</span>
<span class="t c" style="left:238.72px;font-size:6.4px;line-height:6.4px;color:#111;font-weight:400;top:253.60px;transform:scaleX(0.9263);transform-origin:center center;">0</span>
<span class="t c" style="left:298.22px;font-size:6.4px;line-height:6.4px;color:#111;font-weight:400;top:253.60px;transform:scaleX(0.9263);transform-origin:center center;">0</span>
<span class="t c" style="left:357.72px;font-size:6.4px;line-height:6.4px;color:#111;font-weight:400;top:253.60px;transform:scaleX(0.9263);transform-origin:center center;">0</span>
<span class="t c" style="left:416.72px;font-size:6.4px;line-height:6.4px;color:#111;font-weight:400;top:253.60px;transform:scaleX(0.9263);transform-origin:center center;">0</span>
<span class="t c" style="left:474.95px;font-size:6.4px;line-height:6.4px;color:#111;font-weight:400;top:253.60px;transform:scaleX(0.8862);transform-origin:center center;">22</span>
<span class="t c" style="left:562.38px;font-size:6.4px;line-height:6.4px;color:#111;font-weight:400;top:253.60px;transform:scaleX(0.8216);transform-origin:center center;">0%</span>
<span class="t c" style="left:676.82px;font-size:6.4px;line-height:6.4px;color:#111;font-weight:400;top:253.60px;transform:scaleX(0.8252);transform-origin:center center;">100%</span>
<span class="t c" style="left:772.26px;font-size:6.4px;line-height:6.4px;color:#111;font-weight:400;top:253.60px;transform:scaleX(0.9037);transform-origin:right center;">4,676,300</span>
<span class="t c" style="left:887.27px;font-size:6.4px;line-height:6.4px;color:#111;font-weight:400;top:253.60px;transform:scaleX(0.9210);transform-origin:center center;">26-Aug-25</span>
<span class="t c" style="left:944.15px;font-size:6.4px;line-height:6.4px;color:#111;font-weight:400;top:253.60px;transform:scaleX(0.8721);transform-origin:center center;">10</span>
<span class="t c" style="left:-20.49px;font-size:6.4px;line-height:6.4px;color:#111;font-weight:400;top:261.60px;letter-spacing:0.3px;">Bandung</span>
<span class="t c" style="left:117.75px;font-size:6.4px;line-height:6.4px;color:#111;font-weight:400;top:261.60px;transform:scaleX(0.8862);transform-origin:center center;">26</span>
<span class="t c" style="left:179.22px;font-size:6.4px;line-height:6.4px;color:#111;font-weight:400;top:261.60px;transform:scaleX(0.9263);transform-origin:center center;">0</span>
<span class="t c" style="left:238.72px;font-size:6.4px;line-height:6.4px;color:#111;font-weight:400;top:261.60px;transform:scaleX(0.9263);transform-origin:center center;">0</span>
<span class="t c" style="left:298.22px;font-size:6.4px;line-height:6.4px;color:#111;font-weight:400;top:261.60px;transform:scaleX(0.9263);transform-origin:center center;">0</span>
<span class="t c" style="left:357.72px;font-size:6.4px;line-height:6.4px;color:#111;font-weight:400;top:261.60px;transform:scaleX(0.9263);transform-origin:center center;">0</span>
<span class="t c" style="left:416.72px;font-size:6.4px;line-height:6.4px;color:#111;font-weight:400;top:261.60px;transform:scaleX(0.9263);transform-origin:center center;">0</span>
<span class="t c" style="left:474.95px;font-size:6.4px;line-height:6.4px;color:#111;font-weight:400;top:261.60px;transform:scaleX(0.8862);transform-origin:center center;">26</span>
<span class="t c" style="left:562.38px;font-size:6.4px;line-height:6.4px;color:#111;font-weight:400;top:261.60px;transform:scaleX(0.8216);transform-origin:center center;">0%</span>
<span class="t c" style="left:676.82px;font-size:6.4px;line-height:6.4px;color:#111;font-weight:400;top:261.60px;transform:scaleX(0.8252);transform-origin:center center;">100%</span>
<span class="t c" style="left:777.59px;font-size:6.4px;line-height:6.4px;color:#111;font-weight:400;top:261.60px;transform:scaleX(0.8914);transform-origin:right center;">418,500</span>
<span class="t c" style="left:887.27px;font-size:6.4px;line-height:6.4px;color:#111;font-weight:400;top:261.60px;transform:scaleX(0.9210);transform-origin:center center;">26-Aug-25</span>
<span class="t c" style="left:944.15px;font-size:6.4px;line-height:6.4px;color:#111;font-weight:400;top:261.60px;transform:scaleX(0.8721);transform-origin:center center;">10</span>
<span class="t c" style="left:-20.71px;font-size:6.4px;line-height:6.4px;color:#111;font-weight:400;top:270.60px;letter-spacing:0.3px;">Makassar</span>
<span class="t c" style="left:117.75px;font-size:6.4px;line-height:6.4px;color:#111;font-weight:400;top:270.60px;transform:scaleX(0.8862);transform-origin:center center;">19</span>
<span class="t c" style="left:179.22px;font-size:6.4px;line-height:6.4px;color:#111;font-weight:400;top:270.60px;transform:scaleX(0.9263);transform-origin:center center;">0</span>
<span class="t c" style="left:238.72px;font-size:6.4px;line-height:6.4px;color:#111;font-weight:400;top:270.60px;transform:scaleX(0.9263);transform-origin:center center;">0</span>
<span class="t c" style="left:298.22px;font-size:6.4px;line-height:6.4px;color:#111;font-weight:400;top:270.60px;transform:scaleX(0.9263);transform-origin:center center;">0</span>
<span class="t c" style="left:357.72px;font-size:6.4px;line-height:6.4px;color:#111;font-weight:400;top:270.60px;transform:scaleX(0.9263);transform-origin:center center;">0</span>
<span class="t c" style="left:416.72px;font-size:6.4px;line-height:6.4px;color:#111;font-weight:400;top:270.60px;transform:scaleX(0.9263);transform-origin:center center;">0</span>
<span class="t c" style="left:474.95px;font-size:6.4px;line-height:6.4px;color:#111;font-weight:400;top:270.60px;transform:scaleX(0.8862);transform-origin:center center;">19</span>
<span class="t c" style="left:562.38px;font-size:6.4px;line-height:6.4px;color:#111;font-weight:400;top:270.60px;transform:scaleX(0.8216);transform-origin:center center;">0%</span>
<span class="t c" style="left:676.82px;font-size:6.4px;line-height:6.4px;color:#111;font-weight:400;top:270.60px;transform:scaleX(0.8252);transform-origin:center center;">100%</span>
<span class="t c" style="left:772.26px;font-size:6.4px;line-height:6.4px;color:#111;font-weight:400;top:270.60px;transform:scaleX(0.9037);transform-origin:right center;">4,012,100</span>
<span class="t c" style="left:887.27px;font-size:6.4px;line-height:6.4px;color:#111;font-weight:400;top:270.60px;transform:scaleX(0.9210);transform-origin:center center;">26-Aug-25</span>
<span class="t c" style="left:944.15px;font-size:6.4px;line-height:6.4px;color:#111;font-weight:400;top:270.60px;transform:scaleX(0.8721);transform-origin:center center;">10</span>
<span class="t c" style="left:-19.91px;font-size:6.4px;line-height:6.4px;color:#111;font-weight:400;top:278.60px;letter-spacing:0.3px;">Manado</span>
<span class="t c" style="left:117.75px;font-size:6.4px;line-height:6.4px;color:#111;font-weight:400;top:278.60px;transform:scaleX(0.8862);transform-origin:center center;">17</span>
<span class="t c" style="left:179.22px;font-size:6.4px;line-height:6.4px;color:#111;font-weight:400;top:278.60px;transform:scaleX(0.9263);transform-origin:center center;">0</span>
<span class="t c" style="left:238.72px;font-size:6.4px;line-height:6.4px;color:#111;font-weight:400;top:278.60px;transform:scaleX(0.9263);transform-origin:center center;">0</span>
<span class="t c" style="left:298.22px;font-size:6.4px;line-height:6.4px;color:#111;font-weight:400;top:278.60px;transform:scaleX(0.9263);transform-origin:center center;">0</span>
<span class="t c" style="left:357.72px;font-size:6.4px;line-height:6.4px;color:#111;font-weight:400;top:278.60px;transform:scaleX(0.9263);transform-origin:center center;">0</span>
<span class="t c" style="left:416.72px;font-size:6.4px;line-height:6.4px;color:#111;font-weight:400;top:278.60px;transform:scaleX(0.9263);transform-origin:center center;">0</span>
<span class="t c" style="left:474.95px;font-size:6.4px;line-height:6.4px;color:#111;font-weight:400;top:278.60px;transform:scaleX(0.8862);transform-origin:center center;">17</span>
<span class="t c" style="left:562.38px;font-size:6.4px;line-height:6.4px;color:#111;font-weight:400;top:278.60px;transform:scaleX(0.8216);transform-origin:center center;">0%</span>
<span class="t c" style="left:676.82px;font-size:6.4px;line-height:6.4px;color:#111;font-weight:400;top:278.60px;transform:scaleX(0.8252);transform-origin:center center;">100%</span>
<span class="t c" style="left:772.26px;font-size:6.4px;line-height:6.4px;color:#111;font-weight:400;top:278.60px;transform:scaleX(0.9037);transform-origin:right center;">2,336,000</span>
<span class="t c" style="left:887.27px;font-size:6.4px;line-height:6.4px;color:#111;font-weight:400;top:278.60px;transform:scaleX(0.9210);transform-origin:center center;">26-Aug-25</span>
<span class="t c" style="left:944.15px;font-size:6.4px;line-height:6.4px;color:#111;font-weight:400;top:278.60px;transform:scaleX(0.8721);transform-origin:center center;">10</span>
<span class="t c" style="left:-19.25px;font-size:6.4px;line-height:6.4px;color:#111;font-weight:400;top:287.60px;letter-spacing:0.3px;">Medan</span>
<span class="t c" style="left:117.75px;font-size:6.4px;line-height:6.4px;color:#111;font-weight:400;top:287.60px;transform:scaleX(0.8862);transform-origin:center center;">19</span>
<span class="t c" style="left:179.22px;font-size:6.4px;line-height:6.4px;color:#111;font-weight:400;top:287.60px;transform:scaleX(0.9263);transform-origin:center center;">1</span>
<span class="t c" style="left:238.72px;font-size:6.4px;line-height:6.4px;color:#111;font-weight:400;top:287.60px;transform:scaleX(0.9263);transform-origin:center center;">0</span>
<span class="t c" style="left:298.22px;font-size:6.4px;line-height:6.4px;color:#111;font-weight:400;top:287.60px;transform:scaleX(0.9263);transform-origin:center center;">0</span>
<span class="t c" style="left:357.72px;font-size:6.4px;line-height:6.4px;color:#111;font-weight:400;top:287.60px;transform:scaleX(0.9263);transform-origin:center center;">0</span>
<span class="t c" style="left:416.72px;font-size:6.4px;line-height:6.4px;color:#111;font-weight:400;top:287.60px;transform:scaleX(0.9263);transform-origin:center center;">0</span>
<span class="t c" style="left:474.95px;font-size:6.4px;line-height:6.4px;color:#111;font-weight:400;top:287.60px;transform:scaleX(0.8862);transform-origin:center center;">18</span>
<span class="t c" style="left:562.38px;font-size:6.4px;line-height:6.4px;color:#111;font-weight:400;top:287.60px;transform:scaleX(0.8216);transform-origin:center center;">0%</span>
<span class="t c" style="left:678.60px;font-size:6.4px;line-height:6.4px;color:#111;font-weight:400;top:287.60px;transform:scaleX(0.8283);transform-origin:center center;">95%</span>
<span class="t c" style="left:772.26px;font-size:6.4px;line-height:6.4px;color:#111;font-weight:400;top:287.60px;transform:scaleX(0.9037);transform-origin:right center;">3,031,220</span>
<span class="t c" style="left:887.27px;font-size:6.4px;line-height:6.4px;color:#111;font-weight:400;top:287.60px;transform:scaleX(0.9210);transform-origin:center center;">26-Aug-25</span>
<span class="t c" style="left:944.15px;font-size:6.4px;line-height:6.4px;color:#111;font-weight:400;top:287.60px;transform:scaleX(0.8721);transform-origin:center center;">10</span>
<span class="t c" style="left:-20.77px;font-size:6.4px;line-height:6.4px;color:#111;font-weight:400;top:296.60px;letter-spacing:0.3px;">Malang</span>
<span class="t c" style="left:117.75px;font-size:6.4px;line-height:6.4px;color:#111;font-weight:400;top:296.60px;transform:scaleX(0.8862);transform-origin:center center;">25</span>
<span class="t c" style="left:179.22px;font-size:6.4px;line-height:6.4px;color:#111;font-weight:400;top:296.60px;transform:scaleX(0.9263);transform-origin:center center;">0</span>
<span class="t c" style="left:238.72px;font-size:6.4px;line-height:6.4px;color:#111;font-weight:400;top:296.60px;transform:scaleX(0.9263);transform-origin:center center;">0</span>
<span class="t c" style="left:298.22px;font-size:6.4px;line-height:6.4px;color:#111;font-weight:400;top:296.60px;transform:scaleX(0.9263);transform-origin:center center;">0</span>
<span class="t c" style="left:357.72px;font-size:6.4px;line-height:6.4px;color:#111;font-weight:400;top:296.60px;transform:scaleX(0.9263);transform-origin:center center;">0</span>
<span class="t c" style="left:416.72px;font-size:6.4px;line-height:6.4px;color:#111;font-weight:400;top:296.60px;transform:scaleX(0.9263);transform-origin:center center;">0</span>
<span class="t c" style="left:474.95px;font-size:6.4px;line-height:6.4px;color:#111;font-weight:400;top:296.60px;transform:scaleX(0.8862);transform-origin:center center;">25</span>
<span class="t c" style="left:562.38px;font-size:6.4px;line-height:6.4px;color:#111;font-weight:400;top:296.60px;transform:scaleX(0.8216);transform-origin:center center;">0%</span>
<span class="t c" style="left:676.82px;font-size:6.4px;line-height:6.4px;color:#111;font-weight:400;top:296.60px;transform:scaleX(0.8252);transform-origin:center center;">100%</span>
<span class="t c" style="left:777.59px;font-size:6.4px;line-height:6.4px;color:#111;font-weight:400;top:296.60px;transform:scaleX(0.8914);transform-origin:right center;">780,000</span>
<span class="t c" style="left:887.27px;font-size:6.4px;line-height:6.4px;color:#111;font-weight:400;top:296.60px;transform:scaleX(0.9210);transform-origin:center center;">26-Aug-25</span>
<span class="t c" style="left:944.15px;font-size:6.4px;line-height:6.4px;color:#111;font-weight:400;top:296.60px;transform:scaleX(0.8721);transform-origin:center center;">10</span>
<span class="t c" style="left:-21.13px;font-size:6.4px;line-height:6.4px;color:#111;font-weight:400;top:304.60px;letter-spacing:0.3px;">Palembang</span>
<span class="t c" style="left:117.75px;font-size:6.4px;line-height:6.4px;color:#111;font-weight:400;top:304.60px;transform:scaleX(0.8862);transform-origin:center center;">21</span>
<span class="t c" style="left:179.22px;font-size:6.4px;line-height:6.4px;color:#111;font-weight:400;top:304.60px;transform:scaleX(0.9263);transform-origin:center center;">1</span>
<span class="t c" style="left:238.72px;font-size:6.4px;line-height:6.4px;color:#111;font-weight:400;top:304.60px;transform:scaleX(0.9263);transform-origin:center center;">0</span>
<span class="t c" style="left:298.22px;font-size:6.4px;line-height:6.4px;color:#111;font-weight:400;top:304.60px;transform:scaleX(0.9263);transform-origin:center center;">0</span>
<span class="t c" style="left:357.72px;font-size:6.4px;line-height:6.4px;color:#111;font-weight:400;top:304.60px;transform:scaleX(0.9263);transform-origin:center center;">0</span>
<span class="t c" style="left:416.72px;font-size:6.4px;line-height:6.4px;color:#111;font-weight:400;top:304.60px;transform:scaleX(0.9263);transform-origin:center center;">0</span>
<span class="t c" style="left:474.95px;font-size:6.4px;line-height:6.4px;color:#111;font-weight:400;top:304.60px;transform:scaleX(0.8862);transform-origin:center center;">20</span>
<span class="t c" style="left:562.38px;font-size:6.4px;line-height:6.4px;color:#111;font-weight:400;top:304.60px;transform:scaleX(0.8216);transform-origin:center center;">0%</span>
<span class="t c" style="left:678.60px;font-size:6.4px;line-height:6.4px;color:#111;font-weight:400;top:304.60px;transform:scaleX(0.8283);transform-origin:center center;">95%</span>
<span class="t c" style="left:772.26px;font-size:6.4px;line-height:6.4px;color:#111;font-weight:400;top:304.60px;transform:scaleX(0.9037);transform-origin:right center;">3,743,803</span>
<span class="t c" style="left:887.27px;font-size:6.4px;line-height:6.4px;color:#111;font-weight:400;top:304.60px;transform:scaleX(0.9210);transform-origin:center center;">26-Aug-25</span>
<span class="t c" style="left:944.15px;font-size:6.4px;line-height:6.4px;color:#111;font-weight:400;top:304.60px;transform:scaleX(0.8721);transform-origin:center center;">10</span>
<span class="t c" style="left:-24.25px;font-size:6.4px;line-height:6.4px;color:#111;font-weight:400;top:313.60px;letter-spacing:0.3px;">Jayapura Papua</span>
<span class="t c" style="left:117.75px;font-size:6.4px;line-height:6.4px;color:#111;font-weight:400;top:313.60px;transform:scaleX(0.8862);transform-origin:center center;">20</span>
<span class="t c" style="left:179.22px;font-size:6.4px;line-height:6.4px;color:#111;font-weight:400;top:313.60px;transform:scaleX(0.9263);transform-origin:center center;">0</span>
<span class="t c" style="left:238.72px;font-size:6.4px;line-height:6.4px;color:#111;font-weight:400;top:313.60px;transform:scaleX(0.9263);transform-origin:center center;">0</span>
<span class="t c" style="left:298.22px;font-size:6.4px;line-height:6.4px;color:#111;font-weight:400;top:313.60px;transform:scaleX(0.9263);transform-origin:center center;">0</span>
<span class="t c" style="left:357.72px;font-size:6.4px;line-height:6.4px;color:#111;font-weight:400;top:313.60px;transform:scaleX(0.9263);transform-origin:center center;">0</span>
<span class="t c" style="left:416.72px;font-size:6.4px;line-height:6.4px;color:#111;font-weight:400;top:313.60px;transform:scaleX(0.9263);transform-origin:center center;">0</span>
<span class="t c" style="left:474.95px;font-size:6.4px;line-height:6.4px;color:#111;font-weight:400;top:313.60px;transform:scaleX(0.8862);transform-origin:center center;">20</span>
<span class="t c" style="left:562.38px;font-size:6.4px;line-height:6.4px;color:#111;font-weight:400;top:313.60px;transform:scaleX(0.8216);transform-origin:center center;">0%</span>
<span class="t c" style="left:676.82px;font-size:6.4px;line-height:6.4px;color:#111;font-weight:400;top:313.60px;transform:scaleX(0.8252);transform-origin:center center;">100%</span>
<span class="t c" style="left:772.26px;font-size:6.4px;line-height:6.4px;color:#111;font-weight:400;top:313.60px;transform:scaleX(0.9037);transform-origin:right center;">2,166,930</span>
<span class="t c" style="left:887.27px;font-size:6.4px;line-height:6.4px;color:#111;font-weight:400;top:313.60px;transform:scaleX(0.9210);transform-origin:center center;">26-Aug-25</span>
<span class="t c" style="left:944.15px;font-size:6.4px;line-height:6.4px;color:#111;font-weight:400;top:313.60px;transform:scaleX(0.8721);transform-origin:center center;">10</span>
<span class="t c" style="left:-21.43px;font-size:6.4px;line-height:6.4px;color:#111;font-weight:400;top:322.60px;letter-spacing:0.3px;">Pekanbaru</span>
<span class="t c" style="left:117.75px;font-size:6.4px;line-height:6.4px;color:#111;font-weight:400;top:322.60px;transform:scaleX(0.8862);transform-origin:center center;">38</span>
<span class="t c" style="left:179.22px;font-size:6.4px;line-height:6.4px;color:#111;font-weight:400;top:322.60px;transform:scaleX(0.9263);transform-origin:center center;">0</span>
<span class="t c" style="left:238.72px;font-size:6.4px;line-height:6.4px;color:#111;font-weight:400;top:322.60px;transform:scaleX(0.9263);transform-origin:center center;">0</span>
<span class="t c" style="left:298.22px;font-size:6.4px;line-height:6.4px;color:#111;font-weight:400;top:322.60px;transform:scaleX(0.9263);transform-origin:center center;">0</span>
<span class="t c" style="left:357.72px;font-size:6.4px;line-height:6.4px;color:#111;font-weight:400;top:322.60px;transform:scaleX(0.9263);transform-origin:center center;">0</span>
<span class="t c" style="left:416.72px;font-size:6.4px;line-height:6.4px;color:#111;font-weight:400;top:322.60px;transform:scaleX(0.9263);transform-origin:center center;">0</span>
<span class="t c" style="left:474.95px;font-size:6.4px;line-height:6.4px;color:#111;font-weight:400;top:322.60px;transform:scaleX(0.8862);transform-origin:center center;">38</span>
<span class="t c" style="left:562.38px;font-size:6.4px;line-height:6.4px;color:#111;font-weight:400;top:322.60px;transform:scaleX(0.8216);transform-origin:center center;">0%</span>
<span class="t c" style="left:676.82px;font-size:6.4px;line-height:6.4px;color:#111;font-weight:400;top:322.60px;transform:scaleX(0.8252);transform-origin:center center;">100%</span>
<span class="t c" style="left:772.26px;font-size:6.4px;line-height:6.4px;color:#111;font-weight:400;top:322.60px;transform:scaleX(0.9037);transform-origin:right center;">3,894,340</span>
<span class="t c" style="left:887.27px;font-size:6.4px;line-height:6.4px;color:#111;font-weight:400;top:322.60px;transform:scaleX(0.9210);transform-origin:center center;">26-Aug-25</span>
<span class="t c" style="left:944.15px;font-size:6.4px;line-height:6.4px;color:#111;font-weight:400;top:322.60px;transform:scaleX(0.8721);transform-origin:center center;">10</span>
<span class="t c" style="left:-20.73px;font-size:6.4px;line-height:6.4px;color:#111;font-weight:400;top:330.60px;letter-spacing:0.3px;">Pontianak</span>
<span class="t c" style="left:117.75px;font-size:6.4px;line-height:6.4px;color:#111;font-weight:400;top:330.60px;transform:scaleX(0.8862);transform-origin:center center;">13</span>
<span class="t c" style="left:179.22px;font-size:6.4px;line-height:6.4px;color:#111;font-weight:400;top:330.60px;transform:scaleX(0.9263);transform-origin:center center;">1</span>
<span class="t c" style="left:238.72px;font-size:6.4px;line-height:6.4px;color:#111;font-weight:400;top:330.60px;transform:scaleX(0.9263);transform-origin:center center;">0</span>
<span class="t c" style="left:298.22px;font-size:6.4px;line-height:6.4px;color:#111;font-weight:400;top:330.60px;transform:scaleX(0.9263);transform-origin:center center;">0</span>
<span class="t c" style="left:357.72px;font-size:6.4px;line-height:6.4px;color:#111;font-weight:400;top:330.60px;transform:scaleX(0.9263);transform-origin:center center;">0</span>
<span class="t c" style="left:416.72px;font-size:6.4px;line-height:6.4px;color:#111;font-weight:400;top:330.60px;transform:scaleX(0.9263);transform-origin:center center;">0</span>
<span class="t c" style="left:474.95px;font-size:6.4px;line-height:6.4px;color:#111;font-weight:400;top:330.60px;transform:scaleX(0.8862);transform-origin:center center;">12</span>
<span class="t c" style="left:562.38px;font-size:6.4px;line-height:6.4px;color:#111;font-weight:400;top:330.60px;transform:scaleX(0.8216);transform-origin:center center;">0%</span>
<span class="t c" style="left:678.60px;font-size:6.4px;line-height:6.4px;color:#111;font-weight:400;top:330.60px;transform:scaleX(0.8283);transform-origin:center center;">92%</span>
<span class="t c" style="left:772.26px;font-size:6.4px;line-height:6.4px;color:#111;font-weight:400;top:330.60px;transform:scaleX(0.9037);transform-origin:right center;">2,709,000</span>
<span class="t c" style="left:887.27px;font-size:6.4px;line-height:6.4px;color:#111;font-weight:400;top:330.60px;transform:scaleX(0.9210);transform-origin:center center;">26-Aug-25</span>
<span class="t c" style="left:944.15px;font-size:6.4px;line-height:6.4px;color:#111;font-weight:400;top:330.60px;transform:scaleX(0.8721);transform-origin:center center;">10</span>
<span class="t" style="left:24.46px;font-size:7px;line-height:7px;color:#111;font-weight:700;top:339.30px;transform:scaleX(0.8287);transform-origin:center center;">TOTAL</span>
<span class="t" style="left:115.16px;font-size:7px;line-height:7px;color:#111;font-weight:700;top:339.30px;transform:scaleX(0.9112);transform-origin:center center;">280</span>
<span class="t" style="left:179.05px;font-size:7px;line-height:7px;color:#111;font-weight:700;top:339.30px;transform:scaleX(0.9088);transform-origin:center center;">4</span>
<span class="t" style="left:238.55px;font-size:7px;line-height:7px;color:#111;font-weight:700;top:339.30px;transform:scaleX(0.9088);transform-origin:center center;">0</span>
<span class="t" style="left:298.05px;font-size:7px;line-height:7px;color:#111;font-weight:700;top:339.30px;transform:scaleX(0.9088);transform-origin:center center;">0</span>
<span class="t" style="left:357.55px;font-size:7px;line-height:7px;color:#111;font-weight:700;top:339.30px;transform:scaleX(0.9088);transform-origin:center center;">1</span>
<span class="t" style="left:416.55px;font-size:7px;line-height:7px;color:#111;font-weight:700;top:339.30px;transform:scaleX(0.9088);transform-origin:center center;">0</span>
<span class="t" style="left:472.66px;font-size:7px;line-height:7px;color:#111;font-weight:700;top:339.30px;transform:scaleX(0.9112);transform-origin:center center;">275</span>
<span class="t" style="left:561.94px;font-size:7px;line-height:7px;color:#111;font-weight:700;top:339.30px;transform:scaleX(0.8494);transform-origin:center center;">0%</span>
<span class="t" style="left:677.99px;font-size:7px;line-height:7px;color:#111;font-weight:700;top:339.30px;transform:scaleX(0.8669);transform-origin:center center;">98%</span>
<span class="t" style="left:18.00px;font-size:7.4px;line-height:7.4px;color:#fff;font-weight:700;top:368.10px;transform:scaleX(1.0628);transform-origin:left center;">Brand Detail/Info 2</span>
<span class="t" style="left:-15.07px;font-size:7.4px;line-height:7.4px;color:#fff;font-weight:700;top:368.10px;">Count of</span>
<span class="t" style="left:97.50px;font-size:6.2px;line-height:6.2px;color:#fff;font-weight:700;top:368.70px;transform:scaleX(0.8898);transform-origin:left center;">Aden&#x27;s Categori</span>
<span class="t" style="left:13.63px;font-size:6.6px;line-height:6.6px;color:#fff;font-weight:700;top:378.50px;transform:scaleX(1.0148);transform-origin:center center;">Depo Unilever</span>
<span class="t" style="left:111.61px;font-size:6.5px;line-height:6.5px;color:#fff;font-weight:700;top:378.55px;transform:scaleX(0.9052);transform-origin:center center;">FOOD</span>
<span class="t" style="left:163.28px;font-size:6.5px;line-height:6.5px;color:#fff;font-weight:700;top:378.55px;transform:scaleX(0.9706);transform-origin:center center;">NON FOOD</span>
<span class="t" style="left:231.11px;font-size:6.5px;line-height:6.5px;color:#fff;font-weight:700;top:378.55px;transform:scaleX(0.8785);transform-origin:center center;">BILLS</span>
<span class="t c" style="left:-18.45px;font-size:7.2px;line-height:7.2px;color:#111;font-weight:400;top:388.20px;letter-spacing:-0.25px;">Ambon Maluku</span>
<span class="t c" style="left:119.15px;font-size:7.2px;line-height:7.2px;color:#111;font-weight:400;top:388.20px;letter-spacing:-0.3px;">1</span>
<span class="t c" style="left:238.65px;font-size:7.2px;line-height:7.2px;color:#111;font-weight:400;top:388.20px;letter-spacing:-0.3px;">3</span>
<span class="t c" style="left:-18.58px;font-size:7.2px;line-height:7.2px;color:#111;font-weight:400;top:398.20px;letter-spacing:-0.25px;">Balikpapan</span>
<span class="t c" style="left:238.65px;font-size:7.2px;line-height:7.2px;color:#111;font-weight:400;top:398.20px;letter-spacing:-0.3px;">4</span>
<span class="t c" style="left:-17.20px;font-size:7.2px;line-height:7.2px;color:#111;font-weight:400;top:409.20px;letter-spacing:-0.25px;">Banjarmasin</span>
<span class="t c" style="left:119.15px;font-size:7.2px;line-height:7.2px;color:#111;font-weight:400;top:419.20px;letter-spacing:-0.3px;">1</span>
<span class="t c" style="left:-21.86px;font-size:7.2px;line-height:7.2px;color:#111;font-weight:400;top:429.20px;letter-spacing:-0.25px;">Jayapura Papua</span>
<span class="t c" style="left:-21.67px;font-size:7.2px;line-height:7.2px;color:#111;font-weight:400;top:439.20px;letter-spacing:-0.25px;">Semarang</span>
<span class="t c" style="left:117.30px;font-size:7.2px;line-height:7.2px;color:#111;font-weight:400;top:439.20px;letter-spacing:-0.3px;">22</span>
<span class="t c" style="left:179.15px;font-size:7.2px;line-height:7.2px;color:#111;font-weight:400;top:439.20px;letter-spacing:-0.3px;">3</span>
<span class="t c" style="left:238.65px;font-size:7.2px;line-height:7.2px;color:#111;font-weight:400;top:439.20px;letter-spacing:-0.3px;">1</span>
<span class="t c" style="left:-18.16px;font-size:7.2px;line-height:7.2px;color:#111;font-weight:400;top:449.20px;letter-spacing:-0.25px;">Makassar</span>
<span class="t c" style="left:-17.98px;font-size:7.2px;line-height:7.2px;color:#111;font-weight:400;top:460.20px;letter-spacing:-0.25px;">Manado</span>
<span class="t c" style="left:179.15px;font-size:7.2px;line-height:7.2px;color:#111;font-weight:400;top:460.20px;letter-spacing:-0.3px;">3</span>
<span class="t c" style="left:238.65px;font-size:7.2px;line-height:7.2px;color:#111;font-weight:400;top:460.20px;letter-spacing:-0.3px;">3</span>
<span class="t c" style="left:-18.23px;font-size:7.2px;line-height:7.2px;color:#111;font-weight:400;top:470.20px;letter-spacing:-0.25px;">Medan</span>
<span class="t c" style="left:179.15px;font-size:7.2px;line-height:7.2px;color:#111;font-weight:400;top:470.20px;letter-spacing:-0.3px;">8</span>
<span class="t c" style="left:238.65px;font-size:7.2px;line-height:7.2px;color:#111;font-weight:400;top:470.20px;letter-spacing:-0.3px;">4</span>
<span class="t c" style="left:-20.08px;font-size:7.2px;line-height:7.2px;color:#111;font-weight:400;top:480.20px;letter-spacing:-0.25px;">Malang</span>
<span class="t c" style="left:179.15px;font-size:7.2px;line-height:7.2px;color:#111;font-weight:400;top:480.20px;letter-spacing:-0.3px;">1</span>
<span class="t c" style="left:-18.62px;font-size:7.2px;line-height:7.2px;color:#111;font-weight:400;top:490.20px;letter-spacing:-0.25px;">Palembang</span>
<span class="t c" style="left:238.65px;font-size:7.2px;line-height:7.2px;color:#111;font-weight:400;top:490.20px;letter-spacing:-0.3px;">1</span>
<span class="t" style="left:264.80px;font-size:7.6px;line-height:7.6px;color:#444;font-weight:400;top:69.00px;transform:scaleX(0.8991);transform-origin:left center;">ab</span>
<span class="t" style="left:265.00px;font-size:7.6px;line-height:7.6px;color:#444;font-weight:400;top:76.00px;transform:scaleX(0.8955);transform-origin:left center;">c</span>
<span class="t" style="left:141.30px;font-size:11.4px;line-height:11.4px;color:#3a3a3a;font-weight:400;top:109.60px;transform:scaleX(0.9725);transform-origin:left center;">A</span>
<span class="t" style="left:322.80px;font-size:8.2px;line-height:8.2px;color:#444;font-weight:400;top:110.70px;transform:scaleX(0.8767);transform-origin:left center;">0</span>
<span class="t" style="left:316.20px;font-size:8.2px;line-height:8.2px;color:#444;font-weight:400;top:116.70px;transform:scaleX(0.9218);transform-origin:left center;">.00</span>
<span class="t" style="left:338.20px;font-size:8.2px;line-height:8.2px;color:#444;font-weight:400;top:110.70px;transform:scaleX(0.8252);transform-origin:left center;">.00</span>
<span class="t" style="left:342.20px;font-size:8.2px;line-height:8.2px;color:#444;font-weight:400;top:116.70px;transform:scaleX(0.7890);transform-origin:left center;">.0</span>
<span class="t" style="left:671.40px;font-size:6.6px;line-height:6.6px;color:#2f6fb8;font-weight:700;top:68.50px;transform:scaleX(1.0492);transform-origin:left center;">A</span>
<span class="t" style="left:671.60px;font-size:6.6px;line-height:6.6px;color:#444;font-weight:700;top:76.50px;transform:scaleX(1.1907);transform-origin:left center;">Z</span>
<div style="position:absolute;left:507.5px;top:446.7px;width:118.6px;height:11.9px;background:transparent;border:1.4px solid #2f6b4a;box-sizing:border-box;"></div>
<div style="position:absolute;left:624.2px;top:456.6px;width:3px;height:3px;background:#2f6b4a;box-shadow:0 0 0 0.6px #fff;"></div>
<div style="position:absolute;left:0px;top:497px;width:960px;height:25px;background:#525252;"></div>
<div style="position:absolute;left:0px;top:522px;width:960px;height:1px;background:#474747;"></div>
<div style="position:absolute;left:0px;top:523px;width:960px;height:17px;background:#505050;"></div>
<div style="position:absolute;left:50px;top:497px;width:181px;height:5px;background:#fff;"></div>
<div style="position:absolute;left:-5px;top:497px;width:60px;height:25px;background:#525252;border-radius:0 5px 0 0;"></div>
<div style="position:absolute;left:226px;top:497px;width:20px;height:25px;background:#525252;border-radius:5px 0 0 0;"></div>
<div style="position:absolute;left:55px;top:497px;width:171px;height:22.8px;background:#fff;border-radius:0 0 5px 5px;"></div>
<div style="position:absolute;left:231px;top:500.2px;width:154px;height:19.5px;background:#fbbf1f;border-radius:3px;"></div>
<div style="position:absolute;left:391px;top:500.2px;width:131px;height:19.5px;background:#fbbf1f;border-radius:3px 0 0 3px;"></div>
<div style="position:absolute;left:598.8px;top:502.5px;width:380px;height:14.2px;background:#3a3a3a;border-radius:7.1px;"></div>
<div style="position:absolute;left:761.2px;top:523.8px;width:32.6px;height:16.2px;background:#666;"></div>
<div style="position:absolute;left:61.3px;top:515.4px;width:156.8px;height:2px;background:#217346;"></div>
<div style="position:absolute;left:613px;top:506.2px;width:243.2px;height:7px;background:#c9c9c9;border-radius:3.5px;"></div>
<span class="t" style="left:61.60px;font-size:11.3px;line-height:11.3px;color:#1e1e1e;font-weight:400;top:502.65px;-webkit-text-stroke:0.3px #1e1e1e;transform:scaleX(0.9754);transform-origin:left center;">B. Dashboard Groceries Sep 25</span>
<span class="t" style="left:239.50px;font-size:11px;line-height:11px;color:#2b2b2b;font-weight:400;top:504.80px;-webkit-text-stroke:0.2px #2b2b2b;transform:scaleX(1.0334);transform-origin:left center;">A.1 Adhoc Monitoring 2025</span>
<span class="t" style="left:399.50px;font-size:11px;line-height:11px;color:#2b2b2b;font-weight:400;top:504.80px;-webkit-text-stroke:0.2px #2b2b2b;transform:scaleX(0.9641);transform-origin:left center;">B.1 IPL Groceries Oct 25</span>
<span class="t" style="left:9.20px;font-size:8.2px;line-height:8.2px;color:#ececec;font-weight:400;top:528.70px;transform:scaleX(0.9733);transform-origin:left center;">Circular References: B2</span>
<svg width="960" height="540" viewBox="0 0 960 540" style="left:0;top:0;z-index:20"><path d="M42.900000000000006 95.6 L45.2 98.0 L47.5 95.6" fill="none" stroke="#3c3c3c" stroke-width="1.15"/>
<path d="M141.2 75.3 L143.5 77.7 L145.8 75.3" fill="none" stroke="#3c3c3c" stroke-width="1.15"/>
<path d="M177.5 75.3 L179.8 77.7 L182.10000000000002 75.3" fill="none" stroke="#3c3c3c" stroke-width="1.15"/>
<path d="M131.7 95.8 L134 98.2 L136.3 95.8" fill="none" stroke="#3c3c3c" stroke-width="1.15"/>
<path d="M89.9 116.6 L92.2 119.0 L94.5 116.6" fill="none" stroke="#3c3c3c" stroke-width="1.15"/>
<path d="M124.9 116.6 L127.2 119.0 L129.5 116.6" fill="none" stroke="#3c3c3c" stroke-width="1.15"/>
<path d="M157.5 116.6 L159.8 119.0 L162.10000000000002 116.6" fill="none" stroke="#3c3c3c" stroke-width="1.15"/>
<path d="M286.09999999999997 95.6 L288.4 98.0 L290.7 95.6" fill="none" stroke="#3c3c3c" stroke-width="1.15"/>
<path d="M262.5 116.6 L264.8 119.0 L267.1 116.6" fill="none" stroke="#3c3c3c" stroke-width="1.15"/>
<path d="M376.7 75.3 L379 77.7 L381.3 75.3" fill="none" stroke="#3c3c3c" stroke-width="1.15"/>
<path d="M333.3 95.8 L335.6 98.2 L337.90000000000003 95.8" fill="none" stroke="#3c3c3c" stroke-width="1.15"/>
<path d="M518.3000000000001 74.8 L520.6 77.2 L522.9 74.8" fill="none" stroke="#3c3c3c" stroke-width="1.15"/>
<path d="M486.2 95.8 L488.5 98.2 L490.8 95.8" fill="none" stroke="#3c3c3c" stroke-width="1.15"/>
<path d="M461.2 116.6 L463.5 119.0 L465.8 116.6" fill="none" stroke="#3c3c3c" stroke-width="1.15"/>
<path d="M600.5 74.8 L602.8 77.2 L605.0999999999999 74.8" fill="none" stroke="#3c3c3c" stroke-width="1.15"/>
<path d="M603.3000000000001 95.8 L605.6 98.2 L607.9 95.8" fill="none" stroke="#3c3c3c" stroke-width="1.15"/>
<path d="M597.1 116.6 L599.4 119.0 L601.6999999999999 116.6" fill="none" stroke="#3c3c3c" stroke-width="1.15"/>
<path d="M654.9000000000001 74.8 L657.2 77.2 L659.5 74.8" fill="none" stroke="#3c3c3c" stroke-width="1.15"/>
<path d="M689.2 74.8 L691.5 77.2 L693.8 74.8" fill="none" stroke="#3c3c3c" stroke-width="1.15"/>
<path d="M649.5 95.8 L651.8 98.2 L654.0999999999999 95.8" fill="none" stroke="#3c3c3c" stroke-width="1.15"/>
<path d="M689.2 95.8 L691.5 98.2 L693.8 95.8" fill="none" stroke="#3c3c3c" stroke-width="1.15"/>
<path d="M649.5 116.6 L651.8 119.0 L654.0999999999999 116.6" fill="none" stroke="#3c3c3c" stroke-width="1.15"/>
<path d="M782.9000000000001 112.8 L785.2 115.2 L787.5 112.8" fill="none" stroke="#3c3c3c" stroke-width="1.15"/>
<path d="M41.2 157.0 L45 161.0 L48.8 157.0" fill="none" stroke="#e8e8e8" stroke-width="1.0"/>
<path d="M128.95 157.0 L132.7 161.0 L136.45 157.0" fill="none" stroke="#bbb" stroke-width="1.1"/>
<path d="M75.3 154.5 L84.3 163.5 M84.3 154.5 L75.3 163.5" stroke="#8c8c8c" stroke-width="1" fill="none"/>
<path d="M92.8 159.3 L96.8 163.3 L105.6 154.4" stroke="#8c8c8c" stroke-width="1" fill="none"/>
<path d="M566.4 217.6 V337.6" stroke="#444" stroke-width="0.6" stroke-dasharray="1.2 0.8" fill="none"/>
<path d="M143.25 369.5 h4 l-2 2.2z" fill="#555"/>
<path d="M84.0 380.59999999999997 h4 l-2 2.2z" fill="#555"/>
<text x="246.3" y="119.2" font-size="7.6" fill="#444" font-family="Liberation Sans" transform="rotate(-45 250.2 116.8)">ab</text>
<path d="M100.4 17 V14.7 a1.4 1.4 0 0 0 -1.4 -1.4 H90.1 a1.4 1.4 0 0 0 -1.4 1.4 V23.1 a1.4 1.4 0 0 0 1.4 1.4 H93.4 M91.4 13.5 V17.6 H96.8 M97.6 13.5 V16 M91.4 24.3 V20.4 H93.6" fill="none" stroke="#fff" stroke-width="1.15" stroke-linecap="round" stroke-linejoin="round"/>
<circle cx="98.1" cy="21.9" r="4.7" fill="#53565b"/>
<path d="M95.2 21.3 A3 3 0 0 1 100.5 20.1 M100.9 18.2 v2.2 h-2.2 M101 22.5 A3 3 0 0 1 95.7 23.7 M95.3 25.6 v-2.2 h2.2" fill="none" stroke="#fff" stroke-width="1.05" stroke-linecap="round" stroke-linejoin="round"/>
<path d="M112.3 13.1 V18.6 H117.9 M112.5 18.4 L116.4 14.6 A4.7 4.7 0 0 1 123 21.2 L117.2 25" fill="none" stroke="#fff" stroke-width="1.25" stroke-linecap="round" stroke-linejoin="round"/>
<path d="M153.7 13.1 V18.6 H148.1 M153.5 18.4 L149.6 14.6 A4.7 4.7 0 0 0 143 21.2 L148.8 25" fill="none" stroke="#7b7e81" stroke-width="1.25" stroke-linecap="round" stroke-linejoin="round"/>
<path d="M129.1 17.7 L131.1 19.7 L133.1 17.7" fill="none" stroke="#fff" stroke-width="1" stroke-linecap="round" stroke-linejoin="round"/>
<path d="M159.6 17.7 L161.6 19.7 L163.6 17.7" fill="none" stroke="#7b7e81" stroke-width="1" stroke-linecap="round" stroke-linejoin="round"/>
<path d="M176.3 17.2 H182.5 M176.6 19 L179.4 21.5 L182.2 19" fill="none" stroke="#fff" stroke-width="1" stroke-linecap="round" stroke-linejoin="round"/>
<circle cx="362.8" cy="16.4" r="1.7" fill="none" stroke="#fff" stroke-width="0.9" stroke-linecap="round" stroke-linejoin="round"/><path d="M359.9 22 a2.9 2.9 0 0 1 5.8 0" fill="none" stroke="#fff" stroke-width="0.9" stroke-linecap="round" stroke-linejoin="round"/>
<circle cx="358.3" cy="19.9" r="1.4" fill="none" stroke="#fff" stroke-width="0.9" stroke-linecap="round" stroke-linejoin="round"/><path d="M355.6 24.2 a2.7 2.7 0 0 1 5.4 0" fill="none" stroke="#fff" stroke-width="0.9" stroke-linecap="round" stroke-linejoin="round"/>
<path d="M381.2 13 C379.5 14.3 377.5 15 375.7 15.2 V19.5 C375.7 22.5 378 24.5 381.2 25.6 C384.4 24.5 386.7 22.5 386.7 19.5 V15.2 C384.9 15 382.9 14.3 381.2 13 Z" fill="#1b84e0" stroke="#cfe4f8" stroke-width="0.9"/>
<path d="M463.9 17.9 L467.4 21.4 L470.9 17.9" fill="none" stroke="#fff" stroke-width="1" stroke-linecap="round" stroke-linejoin="round"/>
<circle cx="507.7" cy="17.6" r="3.2" fill="none" stroke="#505050" stroke-width="1" stroke-linecap="round" stroke-linejoin="round"/><path d="M505.4 19.9 L500.6 24.7" fill="none" stroke="#505050" stroke-width="1" stroke-linecap="round" stroke-linejoin="round"/>
<path d="M894.8 19 H903.3" fill="none" stroke="#fff" stroke-width="1" stroke-linecap="round" stroke-linejoin="round"/>
<rect x="933.2" y="17.1" width="6.4" height="6.4" rx="1.4" fill="none" stroke="#fff" stroke-width="1" stroke-linecap="round" stroke-linejoin="round"/>
<path d="M935.3 16.9 a1.5 1.5 0 0 1 1.5 -1.5 h3.3 a1.5 1.5 0 0 1 1.5 1.5 v3.3 a1.5 1.5 0 0 1 -1.5 1.5" fill="none" stroke="#fff" stroke-width="1" stroke-linecap="round" stroke-linejoin="round"/>
<path d="M856.4 46.7 h8 v5.2 h-4.9 l-1.7 1.9 v-1.9 h-1.4 z" fill="none" stroke="#333" stroke-width="0.9" stroke-linecap="round" stroke-linejoin="round"/>
<path d="M934 50 v4.2 h7.6 v-1.8 M936.2 51.6 c0 -2.6 1.6 -3.8 4.3 -3.8 M938.8 45.9 l2.2 1.9 l-2.2 1.9" fill="none" stroke="#123" stroke-width="0.9" stroke-linecap="round" stroke-linejoin="round"/>
<path d="M-6 74 h11 v16 h-11z" fill="#c8c8c8" stroke="#666" stroke-width="1"/>
<rect x="-1" y="71.8" width="7.6" height="5.4" fill="#e3b341" stroke="#5a5a5a" stroke-width="0.9"/>
<rect x="0.9" y="79.7" width="10" height="13.2" fill="#e9e9e9" stroke="#777" stroke-width="0.9"/>
<path d="M-1.8 113 L0.2 115 L2.2 113" fill="none" stroke="#444" stroke-width="1" stroke-linecap="round" stroke-linejoin="round"/>
<path d="M23.3 69.6 L28 78.6 M29 69.6 L24.3 78.6" fill="none" stroke="#666" stroke-width="1" stroke-linecap="round" stroke-linejoin="round"/>
<circle cx="23.7" cy="80.3" r="1.5" fill="none" stroke="#2f6fb8" stroke-width="1" stroke-linecap="round" stroke-linejoin="round"/><circle cx="28.7" cy="80.3" r="1.5" fill="none" stroke="#2f6fb8" stroke-width="1" stroke-linecap="round" stroke-linejoin="round"/>
<path d="M20.4 90.5 h5.4 v10.4 h-5.4z" fill="#dcdcdc" stroke="#5a5a5a" stroke-width="0.9"/>
<path d="M24.8 93.3 h5.2 l2.7 2.7 v6.4 h-7.9z" fill="#ececec" stroke="#5a5a5a" stroke-width="0.9"/>
<path d="M27.2 98 h3.4 M27.2 100 h3.4" fill="none" stroke="#5a5a5a" stroke-width="0.8" stroke-linecap="round" stroke-linejoin="round"/>
<path d="M31.9 112 L27.6 116.2" fill="none" stroke="#5a5a5a" stroke-width="1.8" stroke-linecap="round" stroke-linejoin="round"/>
<path d="M25.2 114.6 L29.3 118.7 L27.6 120.4 L23.5 116.3z" fill="#f0f0f0" stroke="#5a5a5a" stroke-width="0.7"/>
<path d="M23.3 116.5 L27.4 120.6 L25.6 122.6 L20.6 118.6z" fill="#e9b43d" stroke="#8a6a20" stroke-width="0.6"/>
<path d="M51.4 137.6 V133.1 H55.9 M53.5 135.2 L57.5 138.2 M57.6 135.6 V138.3 H54.9" fill="none" stroke="#444" stroke-width="0.9" stroke-linecap="round" stroke-linejoin="round"/>
<path d="M181.3 137.6 V133.1 H185.8 M183.4 135.2 L187.4 138.2 M187.5 135.6 V138.3 H184.8" fill="none" stroke="#444" stroke-width="0.9" stroke-linecap="round" stroke-linejoin="round"/>
<path d="M295.3 137.6 V133.1 H299.8 M297.4 135.2 L301.4 138.2 M301.5 135.6 V138.3 H298.8" fill="none" stroke="#444" stroke-width="0.9" stroke-linecap="round" stroke-linejoin="round"/>
<path d="M381.1 137.6 V133.1 H385.6 M383.2 135.2 L387.2 138.2 M387.3 135.6 V138.3 H384.6" fill="none" stroke="#444" stroke-width="0.9" stroke-linecap="round" stroke-linejoin="round"/>
<path d="M156.9 93.3 L158.5 91.3 L160.1 93.3" fill="none" stroke="#2f6fb8" stroke-width="1.3" stroke-linecap="round" stroke-linejoin="round"/>
<path d="M177.9 91.3 L179.5 93.3 L181.1 91.3" fill="none" stroke="#2f6fb8" stroke-width="1.3" stroke-linecap="round" stroke-linejoin="round"/>
<rect x="71.3" y="111.5" width="11.2" height="10.6" fill="#f1f1f1" stroke="#b5b5b5" stroke-width="0.7"/>
<path d="M76.9 111.5 v10.6 M71.3 115 h11.2 M71.3 118.6 h11.2" fill="none" stroke="#b5b5b5" stroke-width="0.7" stroke-linecap="round" stroke-linejoin="round"/>
<path d="M71 122.4 h11.8" fill="none" stroke="#444" stroke-width="1.2" stroke-linecap="round" stroke-linejoin="round"/>
<path d="M112.4 111.6 L117.2 116.4 L112.8 119.8 L108.3 115.4z" fill="#efefef" stroke="#444" stroke-width="0.9" stroke-linejoin="round"/>
<path d="M111 113 L113.3 110.9" fill="none" stroke="#444" stroke-width="0.9" stroke-linecap="round" stroke-linejoin="round"/>
<path d="M117.6 115.2 q1.5 2 0.3 3.3 q-1.2 -0.6 -0.3 -3.3z" fill="#2f6fb8"/>
<rect x="105.6" y="120.7" width="13.1" height="3" fill="#ffef38"/>
<rect x="138" y="120.7" width="13.3" height="3" fill="#e51a24"/>
<path d="M201 69.8 H212.8 M202.6 73 H211.2 M201 76.1 H212.8 " fill="none" stroke="#505050" stroke-width="1"/>
<path d="M222 71.7 H233.6 M223.6 74.9 H232 M222 78.1 H233.6 " fill="none" stroke="#505050" stroke-width="1"/>
<path d="M243 75 H254.6 M244.6 78.1 H253 M243 81.3 H254.6 " fill="none" stroke="#505050" stroke-width="1"/>
<path d="M201 91.6 H212.8 M201 94.7 H209 M201 97.9 H212.8 M201 101 H209 " fill="none" stroke="#505050" stroke-width="1"/>
<path d="M222 91.6 H233.6 M223.6 94.7 H232 M222 97.9 H233.6 M223.6 101 H232 " fill="none" stroke="#505050" stroke-width="1"/>
<path d="M243 91.6 H254.6 M246.6 94.7 H254.6 M243 97.9 H254.6 M246.6 101 H254.6 " fill="none" stroke="#505050" stroke-width="1"/>
<path d="M201 111.7 H212.8 M208 114.9 H212.8 M208 118.3 H212.8 M201 121.4 H212.8 " fill="none" stroke="#505050" stroke-width="1"/>
<path d="M207 116.6 H201.8 M203.8 114.6 L201.8 116.6 L203.8 118.6" fill="none" stroke="#2f6fb8" stroke-width="1" stroke-linecap="round" stroke-linejoin="round"/>
<path d="M222 111.7 H233.6 M229.2 114.9 H233.6 M229.2 118.3 H233.6 M222 121.4 H233.6 " fill="none" stroke="#505050" stroke-width="1"/>
<path d="M222.3 116.6 H227.7 M225.7 114.6 L227.7 116.6 L225.7 118.6" fill="none" stroke="#2f6fb8" stroke-width="1" stroke-linecap="round" stroke-linejoin="round"/>
<path d="M275.8 74.5 v2.7 a2 2 0 0 1 -2 2 h-3.2 M272.6 77.2 l-2.1 2 l2.1 2" fill="none" stroke="#2f6fb8" stroke-width="1" stroke-linecap="round" stroke-linejoin="round"/>
<rect x="263.5" y="90.3" width="12" height="11.7" fill="#ededed" stroke="#5a5a5a" stroke-width="0.9"/>
<rect x="264" y="93.4" width="11" height="5.6" fill="#2f75c0"/>
<path d="M269.5 90.3 v3 M269.5 99 v3" fill="none" stroke="#5a5a5a" stroke-width="0.8" stroke-linecap="round" stroke-linejoin="round"/>
<path d="M266 96.2 H273 M267.4 94.8 L266 96.2 L267.4 97.6 M271.6 94.8 L273 96.2 L271.6 97.6" fill="none" stroke="#fff" stroke-width="0.8" stroke-linecap="round" stroke-linejoin="round"/>
<path d="M248.8 122.4 L257.2 114 M253.6 113.7 H257.4 V117.5" fill="none" stroke="#2f6fb8" stroke-width="1" stroke-linecap="round" stroke-linejoin="round"/>
<path d="M374.9 92.2 a2.7 2.7 0 0 1 2.7 2.8 c0 2.6 -1.8 5 -4.6 6.4 l-0.6 -0.8 c1.5 -1 2.4 -2 2.5 -3.1 a2.7 2.7 0 0 1 0 -5.3z" fill="#444"/>
<path d="M321 114.6 H314.8 M316.8 112.6 L314.8 114.6 L316.8 116.6" fill="none" stroke="#2f6fb8" stroke-width="1" stroke-linecap="round" stroke-linejoin="round"/>
<path d="M335.4 120.5 H341.8 M339.8 118.5 L341.8 120.5 L339.8 122.5" fill="none" stroke="#2f6fb8" stroke-width="1" stroke-linecap="round" stroke-linejoin="round"/>
<rect x="400.40" y="70.30" width="3.05" height="3.53" fill="#d8413c"/>
<rect x="403.45" y="70.30" width="3.05" height="3.53" fill="#d8413c"/>
<rect x="406.50" y="70.30" width="3.05" height="3.53" fill="#f2f2f2"/>
<rect x="409.55" y="70.30" width="3.05" height="3.53" fill="#f2f2f2"/>
<rect x="400.40" y="73.83" width="3.05" height="3.53" fill="#3b7fd0"/>
<rect x="403.45" y="73.83" width="3.05" height="3.53" fill="#a9c6ea"/>
<rect x="406.50" y="73.83" width="3.05" height="3.53" fill="#f2f2f2"/>
<rect x="409.55" y="73.83" width="3.05" height="3.53" fill="#d8413c"/>
<rect x="400.40" y="77.37" width="3.05" height="3.53" fill="#d8413c"/>
<rect x="403.45" y="77.37" width="3.05" height="3.53" fill="#d8413c"/>
<rect x="406.50" y="77.37" width="3.05" height="3.53" fill="#e8a5a2"/>
<rect x="409.55" y="77.37" width="3.05" height="3.53" fill="#f2f2f2"/>
<path d="M400.40 70.3 v10.6 M403.45 70.3 v10.6 M406.50 70.3 v10.6 M409.55 70.3 v10.6 M412.60 70.3 v10.6 M400.4 70.30 h12.2 M400.4 73.83 h12.2 M400.4 77.37 h12.2 M400.4 80.90 h12.2 " fill="none" stroke="#5c5c5c" stroke-width="0.7"/>
<rect x="400.40" y="91.20" width="4.07" height="3.53" fill="#f2f2f2"/>
<rect x="404.47" y="91.20" width="4.07" height="3.53" fill="#f2f2f2"/>
<rect x="408.53" y="91.20" width="4.07" height="3.53" fill="#f2f2f2"/>
<rect x="400.40" y="94.73" width="4.07" height="3.53" fill="#f2f2f2"/>
<rect x="404.47" y="94.73" width="4.07" height="3.53" fill="#9fc6ee"/>
<rect x="408.53" y="94.73" width="4.07" height="3.53" fill="#9fc6ee"/>
<rect x="400.40" y="98.27" width="4.07" height="3.53" fill="#f2f2f2"/>
<rect x="404.47" y="98.27" width="4.07" height="3.53" fill="#9fc6ee"/>
<rect x="408.53" y="98.27" width="4.07" height="3.53" fill="#9fc6ee"/>
<path d="M400.40 91.2 v10.6 M404.47 91.2 v10.6 M408.53 91.2 v10.6 M412.60 91.2 v10.6 M400.4 91.20 h12.2 M400.4 94.73 h12.2 M400.4 98.27 h12.2 M400.4 101.80 h12.2 " fill="none" stroke="#5c5c5c" stroke-width="0.7"/>
<path d="M412.4 94.6 L405.8 101.2" fill="none" stroke="#444" stroke-width="2.2" stroke-linecap="round" stroke-linejoin="round"/><path d="M412.2 94.8 L406.2 100.8" fill="none" stroke="#e8e8e8" stroke-width="0.9" stroke-linecap="round" stroke-linejoin="round"/><path d="M405.6 100.4 L404.2 102.6 L406.6 101.4z" fill="#2f6fb8" stroke="#2f6fb8" stroke-width="0.6"/>
<rect x="400.4" y="112" width="12.2" height="10.8" fill="#f2f2f2" stroke="#6a6a6a" stroke-width="0.8"/>
<path d="M400.8 114.4 L412.2 114.4 L400.8 122.4z" fill="#3b7fd0"/>
<path d="M400.4 114.2 h12.2" fill="none" stroke="#6a6a6a" stroke-width="0.7" stroke-linecap="round" stroke-linejoin="round"/>
<path d="M412.4 115.4 L405.8 122" fill="none" stroke="#444" stroke-width="2.2" stroke-linecap="round" stroke-linejoin="round"/><path d="M412.2 115.6 L406.2 121.6" fill="none" stroke="#e8e8e8" stroke-width="0.9" stroke-linecap="round" stroke-linejoin="round"/><path d="M405.6 121.2 L404.2 123.4 L406.6 122.2z" fill="#2f6fb8" stroke="#2f6fb8" stroke-width="0.6"/>
<rect x="547.20" y="70.30" width="4.13" height="3.53" fill="#f2f2f2"/>
<rect x="551.33" y="70.30" width="4.13" height="3.53" fill="#f2f2f2"/>
<rect x="555.47" y="70.30" width="4.13" height="3.53" fill="#f2f2f2"/>
<rect x="547.20" y="73.83" width="4.13" height="3.53" fill="#3b82d6"/>
<rect x="551.33" y="73.83" width="4.13" height="3.53" fill="#3b82d6"/>
<rect x="555.47" y="73.83" width="4.13" height="3.53" fill="#3b82d6"/>
<rect x="547.20" y="77.37" width="4.13" height="3.53" fill="#f2f2f2"/>
<rect x="551.33" y="77.37" width="4.13" height="3.53" fill="#f2f2f2"/>
<rect x="555.47" y="77.37" width="4.13" height="3.53" fill="#f2f2f2"/>
<path d="M547.20 70.3 v10.6 M551.33 70.3 v10.6 M555.47 70.3 v10.6 M559.60 70.3 v10.6 M547.2 70.30 h12.4 M547.2 73.83 h12.4 M547.2 77.37 h12.4 M547.2 80.90 h12.4 " fill="none" stroke="#5c5c5c" stroke-width="0.7"/>
<path d="M553 75.6 H546.6 M548.6 73.6 L546.6 75.6 L548.6 77.6" fill="none" stroke="#1f5fa8" stroke-width="1" stroke-linecap="round" stroke-linejoin="round"/>
<rect x="547.20" y="91.20" width="4.13" height="3.53" fill="#f2f2f2"/>
<rect x="551.33" y="91.20" width="4.13" height="3.53" fill="#f2f2f2"/>
<rect x="555.47" y="91.20" width="4.13" height="3.53" fill="#f2f2f2"/>
<rect x="547.20" y="94.73" width="4.13" height="3.53" fill="#f2f2f2"/>
<rect x="551.33" y="94.73" width="4.13" height="3.53" fill="#3b82d6"/>
<rect x="555.47" y="94.73" width="4.13" height="3.53" fill="#f2f2f2"/>
<rect x="547.20" y="98.27" width="4.13" height="3.53" fill="#f2f2f2"/>
<rect x="551.33" y="98.27" width="4.13" height="3.53" fill="#f2f2f2"/>
<rect x="555.47" y="98.27" width="4.13" height="3.53" fill="#f2f2f2"/>
<path d="M547.20 91.2 v10.6 M551.33 91.2 v10.6 M555.47 91.2 v10.6 M559.60 91.2 v10.6 M547.2 91.20 h12.4 M547.2 94.73 h12.4 M547.2 98.27 h12.4 M547.2 101.80 h12.4 " fill="none" stroke="#5c5c5c" stroke-width="0.7"/>
<path d="M556 94.8 L559.4 98.4 M559.4 94.8 L556 98.4" fill="none" stroke="#d8322c" stroke-width="1" stroke-linecap="round" stroke-linejoin="round"/>
<rect x="547.20" y="113.00" width="4.13" height="3.33" fill="#f2f2f2"/>
<rect x="551.33" y="113.00" width="4.13" height="3.33" fill="#f2f2f2"/>
<rect x="555.47" y="113.00" width="4.13" height="3.33" fill="#f2f2f2"/>
<rect x="547.20" y="116.33" width="4.13" height="3.33" fill="#f2f2f2"/>
<rect x="551.33" y="116.33" width="4.13" height="3.33" fill="#3b82d6"/>
<rect x="555.47" y="116.33" width="4.13" height="3.33" fill="#f2f2f2"/>
<rect x="547.20" y="119.67" width="4.13" height="3.33" fill="#f2f2f2"/>
<rect x="551.33" y="119.67" width="4.13" height="3.33" fill="#f2f2f2"/>
<rect x="555.47" y="119.67" width="4.13" height="3.33" fill="#f2f2f2"/>
<path d="M547.20 113 v10 M551.33 113 v10 M555.47 113 v10 M559.60 113 v10 M547.2 113.00 h12.4 M547.2 116.33 h12.4 M547.2 119.67 h12.4 M547.2 123.00 h12.4 " fill="none" stroke="#5c5c5c" stroke-width="0.7"/>
<path d="M549 111.4 H558" fill="none" stroke="#2f6fb8" stroke-width="1.2" stroke-linecap="round" stroke-linejoin="round"/>
<path d="M642.8 72 V70.3 H633.8 L639.2 75.6 L633.8 80.8 H642.8 V79.2" fill="none" stroke="#444" stroke-width="1" stroke-linecap="round" stroke-linejoin="round"/>
<path d="M677.6 73.4 H684 L681.6 76.4 V79.4 L680 78.4 V76.4z" fill="none" stroke="#444" stroke-width="0.9" stroke-linecap="round" stroke-linejoin="round"/>
<rect x="632.2" y="91" width="12.4" height="10.8" fill="#f4f4f4" stroke="#6a6a6a" stroke-width="0.9"/><rect x="632.6" y="91.4" width="11.6" height="2" fill="#9a9a9a"/>
<path d="M638.4 94.6 V100 M636.2 97.8 L638.4 100 L640.6 97.8" fill="none" stroke="#1f6fc0" stroke-width="1" stroke-linecap="round" stroke-linejoin="round"/>
<circle cx="679.9" cy="94.4" r="3.7" fill="#dcdcdc" stroke="#505050" stroke-width="1"/><path d="M677.2 97.2 L672.3 102.1" fill="none" stroke="#505050" stroke-width="1" stroke-linecap="round" stroke-linejoin="round"/>
<path d="M639.6 111.4 L644.2 116 L637 123.2 L632.3 118.6z" fill="#f3dcea" stroke="#b5277f" stroke-width="0.9" stroke-linejoin="round"/>
<path d="M635.4 115.5 L640 120.1 L637 123.2 L632.3 118.6z" fill="#c2308c"/>
<rect x="720.3" y="70" width="22.5" height="21.5" fill="#ececec" stroke="#5a5a5a" stroke-width="1"/>
<rect x="720.8" y="70.5" width="21.5" height="3.2" fill="#9c9c9c"/>
<path d="M720.3 73.8 h22.5 M720.3 79.4 h22.5 M720.3 85.6 h22.5 M727.7 73.8 v17.7 M735.9 73.8 v17.7" fill="none" stroke="#5a5a5a" stroke-width="0.9"/>
<path d="M735.6 84.2 L742.4 91.2" fill="none" stroke="#4a4a4a" stroke-width="1.3" stroke-linecap="round" stroke-linejoin="round"/>
<circle cx="730.6" cy="79" r="6.8" fill="#f4f4f4" stroke="#4a4a4a" stroke-width="1"/>
<rect x="726.8" y="77.8" width="1.7" height="4" fill="#444"/><rect x="729.2" y="75.1" width="2.2" height="6.7" fill="#f4f4f4" stroke="#444" stroke-width="0.6"/><rect x="732.2" y="76.2" width="2.4" height="5.6" fill="#8fc0ee" stroke="#2f75c0" stroke-width="0.8"/>
<rect x="777.2" y="70" width="16.4" height="21.4" rx="0.8" fill="#e6ebf1" stroke="#2d62a3" stroke-width="1.1"/>
<g transform="translate(785.3 81.2) rotate(45)"><rect x="-6.3" y="-2.2" width="12.6" height="4.4" fill="#a9cdf0" stroke="#2d62a3" stroke-width="0.9"/><rect x="-4.2" y="-0.6" width="8.4" height="1.2" fill="#2d62a3"/><rect x="-6.6" y="-12.4" width="13.2" height="4.8" fill="#f4f8fc" stroke="#2d62a3" stroke-width="0.9"/><rect x="-6.6" y="-8.6" width="13.2" height="1.4" fill="#1f4f8f"/><rect x="-2.3" y="-16.8" width="4.6" height="4.4" fill="#cfe5fa" stroke="#2d62a3" stroke-width="0.9"/></g>
<rect x="829.2" y="69.8" width="22.4" height="22.2" fill="#e9a88c" stroke="#d2603a" stroke-width="0.8"/>
<rect x="832.3" y="72.4" width="6.9" height="6.9" fill="#c8c8c8" stroke="#d2603a" stroke-width="0.8"/>
<rect x="841.4" y="72.4" width="6.9" height="6.9" fill="#c8c8c8" stroke="#d2603a" stroke-width="0.8"/>
<rect x="832.3" y="82.3" width="6.9" height="6.9" fill="#c8c8c8" stroke="#d2603a" stroke-width="0.8"/>
<rect x="841.4" y="82.3" width="6.9" height="6.9" fill="#c8c8c8" stroke="#d2603a" stroke-width="0.8"/>
<path d="M895.4 89.8 h-5.2 a1.8 1.8 0 0 1 -1.8 -1.8 v-14.6 a1.8 1.8 0 0 1 1.8 -1.8 h8.4 l4.6 4.6 v5.4" fill="none" stroke="#4a74c0" stroke-width="1.1" stroke-linecap="round" stroke-linejoin="round"/>
<path d="M891.6 83.4 c2 -2.6 3.4 -5.6 3.2 -7.6 c-0.4 -1 -1.4 -0.2 -1 1.6 c0.6 2.4 3 4.6 5.4 4.6 c1.6 0 1.2 -1.2 -0.4 -1.2 c-2.4 0 -5.2 1 -7.2 2.6z" fill="none" stroke="#4a74c0" stroke-width="0.8" stroke-linecap="round" stroke-linejoin="round"/>
<g transform="translate(902.3 87.8) rotate(-42)"><rect x="-7.2" y="-2.3" width="7.8" height="4.6" rx="2.3" fill="none" stroke="#4a74c0" stroke-width="1.2"/><rect x="-0.6" y="-2.3" width="7.8" height="4.6" rx="2.3" fill="none" stroke="#4a74c0" stroke-width="1.2"/></g>
<path d="M10.8 506 L15.4 509.5 L10.8 513" fill="none" stroke="#d0d0d0" stroke-width="1.1" stroke-linecap="round" stroke-linejoin="round"/>
<circle cx="34.8" cy="509.4" r="1.15" fill="#e4e4e4"/>
<circle cx="38.3" cy="509.4" r="1.15" fill="#e4e4e4"/>
<circle cx="41.8" cy="509.4" r="1.15" fill="#e4e4e4"/>
<circle cx="530.9" cy="509.4" r="1.15" fill="#e4e4e4"/>
<circle cx="534.5" cy="509.4" r="1.15" fill="#e4e4e4"/>
<circle cx="538.1" cy="509.4" r="1.15" fill="#e4e4e4"/>
<path d="M555.6 509.4 H564.6 M560.1 504.9 V513.9" fill="none" stroke="#cfcfcf" stroke-width="1" stroke-linecap="round" stroke-linejoin="round"/>
<rect x="585.3" y="505.6" width="2" height="2" fill="#dcdcdc"/>
<rect x="585.3" y="509" width="2" height="2" fill="#dcdcdc"/>
<rect x="585.3" y="512.4" width="2" height="2" fill="#dcdcdc"/>
<path d="M608.6 506.2 V513 L603.8 509.6z" fill="#f0f0f0"/>
<path d="M115 536.6 h-5.2 v-9 h10.8 v3.4 M109.8 529.6 h10.8 M112.6 529.6 v7" fill="none" stroke="#e0e0e0" stroke-width="0.9" stroke-linecap="round" stroke-linejoin="round"/>
<circle cx="117.6" cy="534" r="3" fill="none" stroke="#e0e0e0" stroke-width="0.9" stroke-linecap="round" stroke-linejoin="round"/><circle cx="117.6" cy="534" r="1.3" fill="#e0e0e0"/>
<rect x="771.8" y="526.6" width="10.6" height="10.4" fill="#f2f2f2"/>
<path d="M775.3 526.6 v10.4 M778.9 526.6 v10.4 M771.8 530.1 h10.6 M771.8 533.6 h10.6" fill="none" stroke="#666" stroke-width="0.9"/>
<rect x="804.2" y="527" width="11.2" height="9.8" fill="none" stroke="#e0e0e0" stroke-width="1" stroke-linecap="round" stroke-linejoin="round"/><rect x="807" y="529.4" width="5.6" height="5" fill="none" stroke="#e0e0e0" stroke-width="0.9" stroke-linecap="round" stroke-linejoin="round"/>
<path d="M836.7 527 h11 v9.8 h-11z M840.4 527 v5.2 h3.8 v-5.2" fill="none" stroke="#e0e0e0" stroke-width="1.1" stroke-linecap="round" stroke-linejoin="round"/>
<path d="M862.6 531.8 H868.6" fill="none" stroke="#b0b0b0" stroke-width="1" stroke-linecap="round" stroke-linejoin="round"/><path d="M873 531.8 H952.5" fill="none" stroke="#a8a8a8" stroke-width="1" stroke-linecap="round" stroke-linejoin="round"/>
<rect x="890" y="527.2" width="4.2" height="9" fill="#c4c4c4"/><rect x="912.1" y="528.6" width="0.9" height="6.4" fill="#a8a8a8"/>
<path d="M956.6 531.8 H962 M959.4 528.8 V534.8" fill="none" stroke="#b0b0b0" stroke-width="1" stroke-linecap="round" stroke-linejoin="round"/></svg>
</div></body></html>
